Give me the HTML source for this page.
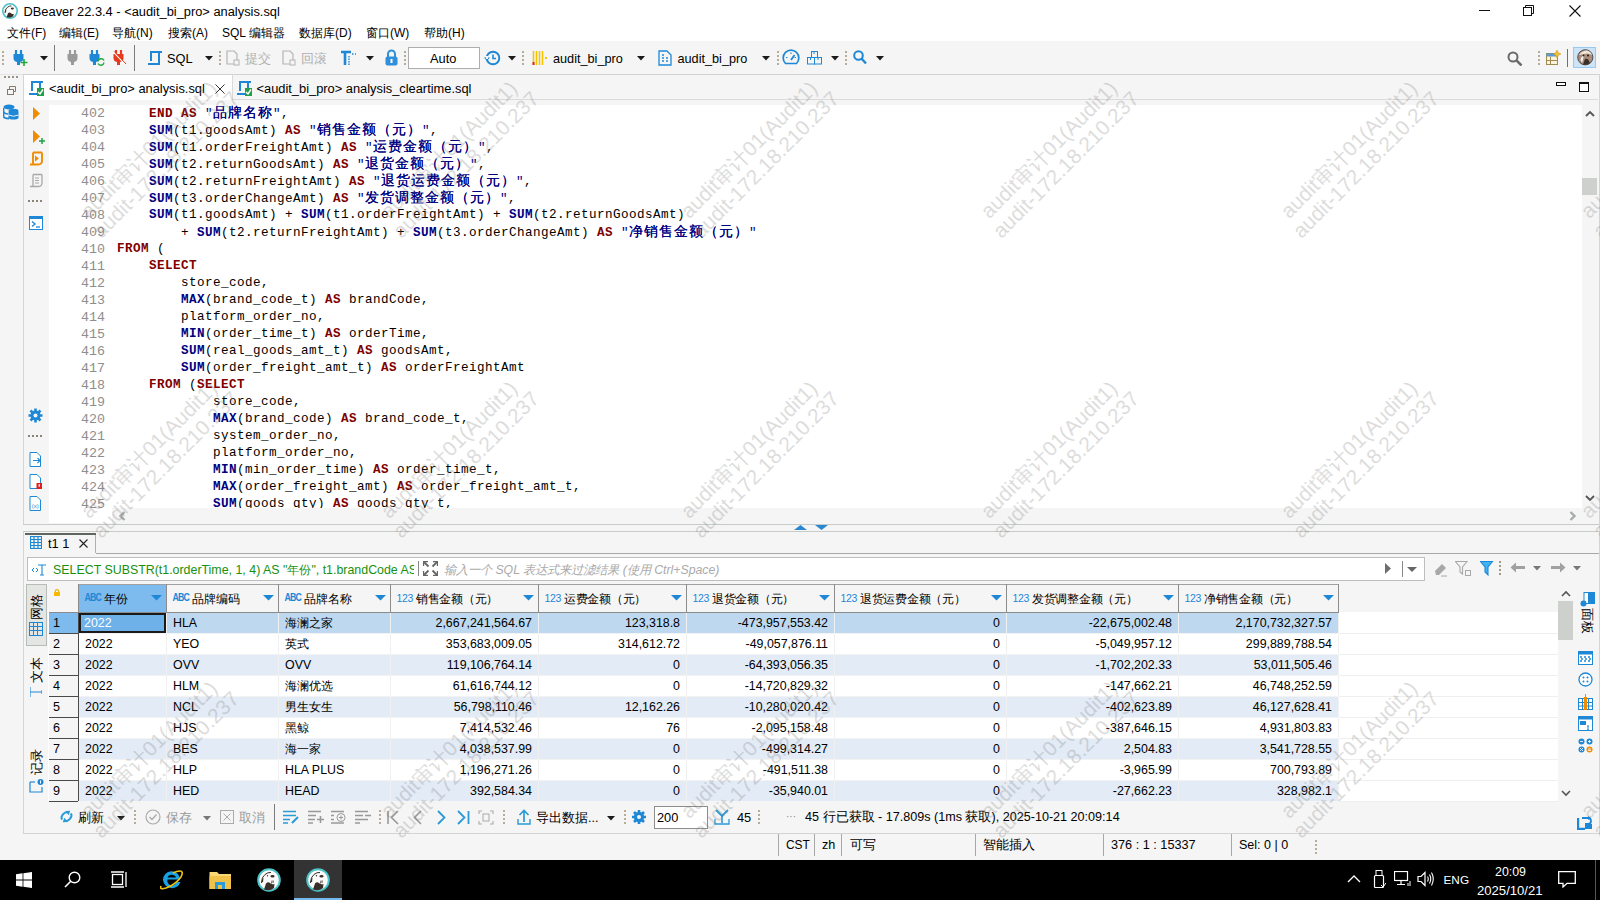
<!DOCTYPE html><html><head><meta charset="utf-8"><title>DBeaver</title><style>
*{margin:0;padding:0;box-sizing:border-box}
html,body{width:1600px;height:900px;overflow:hidden;background:#f5f5f5;font-family:"Liberation Sans",sans-serif;font-size:12px;color:#000;position:relative}
.ab{position:absolute}
.t{position:absolute;white-space:pre;line-height:1}
.code{position:absolute;font-family:"Liberation Mono",monospace;font-size:12.6px;letter-spacing:0.44px;white-space:pre;line-height:17px;color:#000}
.kw{color:#800000;font-weight:bold}
.fn{color:#000080;font-weight:bold}
.st{color:#000080}
.cj{font-size:14px;letter-spacing:1px;text-shadow:0.45px 0 0 #000080}
.ln{position:absolute;font-family:"Liberation Mono",monospace;font-size:13.33px;color:#8e8e8e;line-height:17px;white-space:pre;text-align:right;width:40px}
</style></head><body>
<div class="ab" style="left:0px;top:0px;width:1600px;height:41px;background:#fff;"></div>
<svg class="ab" style="left:2px;top:3px;" width="16" height="16" viewBox="0 0 16 16"><g transform="scale(0.6667)"><circle cx="12" cy="12" r="10.8" fill="#fbfbfb" stroke="#4ec3c8" stroke-width="2.4"/><path d="M4.5 15Q4.5 9 8 6.5Q11 4 14 4.5" stroke="#3a2e28" stroke-width="1.4" fill="none"/><path d="M4.5 14Q4.8 10.5 6.5 9.5L6 14Z" fill="#3a2e28"/><ellipse cx="15.5" cy="8.2" rx="2.3" ry="1.5" fill="#3a2e28"/><path d="M7 21.5L9 15.5Q11 13.5 13 15Q15 17 17.5 16L17 20Q13 23.5 7 21.5Z" fill="#3a2e28"/></g></svg>
<div class="t" style="left:23.5px;top:5.62px;font-size:12.85px;color:#000;">DBeaver 22.3.4 - &lt;audit_bi_pro&gt; analysis.sql</div>
<div class="ab" style="left:1479px;top:10px;width:11px;height:1px;background:#111;"></div>
<svg class="ab" style="left:1523px;top:5px;" width="12" height="11" viewBox="0 0 12 11"><rect x="0.5" y="2.5" width="8" height="8" fill="none" stroke="#111"/><path d="M2.5 2.5V0.5H10.5V8.5H8.5" fill="none" stroke="#111"/></svg>
<svg class="ab" style="left:1569px;top:5px;" width="12" height="12" viewBox="0 0 12 12"><path d="M0.5 0.5L11.5 11.5M11.5 0.5L0.5 11.5" stroke="#111" stroke-width="1.1"/></svg>
<div class="t" style="left:7px;top:27.34px;font-size:12px;color:#000;">文件(F)</div>
<div class="t" style="left:59px;top:27.34px;font-size:12px;color:#000;">编辑(E)</div>
<div class="t" style="left:112px;top:27.34px;font-size:12px;color:#000;">导航(N)</div>
<div class="t" style="left:168px;top:27.34px;font-size:12px;color:#000;">搜索(A)</div>
<div class="t" style="left:222px;top:27.34px;font-size:12px;color:#000;">SQL 编辑器</div>
<div class="t" style="left:299px;top:27.34px;font-size:12px;color:#000;">数据库(D)</div>
<div class="t" style="left:366px;top:27.34px;font-size:12px;color:#000;">窗口(W)</div>
<div class="t" style="left:424px;top:27.34px;font-size:12px;color:#000;">帮助(H)</div>
<div class="ab" style="left:0px;top:74px;width:1600px;height:1px;background:#e3e3e3;"></div>
<svg class="ab" style="left:2px;top:51px;" width="2" height="15" viewBox="0 0 2 15"><rect x="0" y="0" width="2" height="2" fill="#b5ad96"/><rect x="0" y="4" width="2" height="2" fill="#b5ad96"/><rect x="0" y="8" width="2" height="2" fill="#b5ad96"/><rect x="0" y="12" width="2" height="2" fill="#b5ad96"/></svg>
<svg class="ab" style="left:13px;top:50px;" width="16" height="16" viewBox="0 0 16 16"><path d="M3 0V4M8 0V4" stroke="#1e88d6" stroke-width="2.2"/><path d="M0.5 4H10.5V8Q10.5 11.5 7 12V15H4V12Q0.5 11.5 0.5 8Z" fill="#1e88d6"/><path d="M11 9V16M7.5 12.5H14.5" stroke="#1fa83a" stroke-width="1.6"/></svg>
<svg class="ab" style="left:40px;top:56px;" width="8" height="5" viewBox="0 0 8 5"><path d="M0 0H8L4 4.5Z" fill="#1a1a1a"/></svg>
<div class="ab" style="left:54px;top:45px;width:1px;height:26px;background:#7a7a7a;"></div>
<svg class="ab" style="left:67px;top:50px;" width="12" height="16" viewBox="0 0 12 16"><path d="M3 0V4M8 0V4" stroke="#9a9a9a" stroke-width="2.2"/><path d="M0.5 4H10.5V8Q10.5 11.5 7 12V15H4V12Q0.5 11.5 0.5 8Z" fill="#9a9a9a"/></svg>
<svg class="ab" style="left:89px;top:50px;" width="16" height="16" viewBox="0 0 16 16"><path d="M3 0V4M8 0V4" stroke="#1e88d6" stroke-width="2.2"/><path d="M0.5 4H10.5V8Q10.5 11.5 7 12V15H4V12Q0.5 11.5 0.5 8Z" fill="#1e88d6"/><path d="M9 11.5A3.2 3.2 0 0 1 15 10.5M15 12.5A3.2 3.2 0 0 1 9 13.5" stroke="#1fa83a" stroke-width="1.5" fill="none"/></svg>
<svg class="ab" style="left:113px;top:50px;" width="14" height="16" viewBox="0 0 14 16"><path d="M3 0V4M8 0V4" stroke="#e53a1c" stroke-width="2.2"/><path d="M0.5 4H10.5V8Q10.5 11.5 7 12V15H4V12Q0.5 11.5 0.5 8Z" fill="#e53a1c"/><path d="M0.5 2L12.5 14.5" stroke="#fff" stroke-width="1.2"/><path d="M1.2 1.5L13 14" stroke="#e53a1c" stroke-width="1"/></svg>
<div class="ab" style="left:134px;top:45px;width:1px;height:26px;background:#7a7a7a;"></div>
<svg class="ab" style="left:147px;top:50px;" width="15" height="16" viewBox="0 0 15 16"><rect x="3" y="1" width="12" height="2" fill="#1e88d6"/><rect x="3" y="1" width="2" height="10" fill="#1e88d6"/><rect x="11" y="1" width="2" height="14" fill="#1e88d6"/><rect x="1" y="13" width="12" height="2" fill="#1e88d6"/></svg>
<div class="t" style="left:167px;top:52.86px;font-size:12.8px;color:#000;">SQL</div>
<svg class="ab" style="left:205px;top:56px;" width="8" height="5" viewBox="0 0 8 5"><path d="M0 0H8L4 4.5Z" fill="#1a1a1a"/></svg>
<svg class="ab" style="left:219px;top:51px;" width="2" height="15" viewBox="0 0 2 15"><rect x="0" y="0" width="2" height="2" fill="#b5ad96"/><rect x="0" y="4" width="2" height="2" fill="#b5ad96"/><rect x="0" y="8" width="2" height="2" fill="#b5ad96"/><rect x="0" y="12" width="2" height="2" fill="#b5ad96"/></svg>
<svg class="ab" style="left:226px;top:50px;" width="15" height="16" viewBox="0 0 15 16"><path d="M1 1H8L11 4V14H1Z" fill="none" stroke="#b4b4b4" stroke-width="1.2"/><rect x="8" y="10" width="5" height="5" fill="#f5f5f5" stroke="#b4b4b4"/></svg>
<div class="t" style="left:245px;top:53.12px;font-size:12.5px;color:#b0b0b0;">提交</div>
<svg class="ab" style="left:282px;top:50px;" width="15" height="16" viewBox="0 0 15 16"><path d="M1 1H8L11 4V14H1Z" fill="none" stroke="#b4b4b4" stroke-width="1.2"/><rect x="8" y="10" width="5" height="5" fill="#f5f5f5" stroke="#b4b4b4"/></svg>
<div class="t" style="left:301px;top:53.12px;font-size:12.5px;color:#b0b0b0;">回滚</div>
<svg class="ab" style="left:340px;top:50px;" width="17" height="16" viewBox="0 0 17 16"><path d="M1 2H11M5 2V15" stroke="#1e88d6" stroke-width="2.6"/><path d="M9 6V15M12 4H14M15 4H16" stroke="#1e88d6" stroke-width="1.4" stroke-dasharray="1.5 1"/></svg>
<svg class="ab" style="left:366px;top:56px;" width="8" height="5" viewBox="0 0 8 5"><path d="M0 0H8L4 4.5Z" fill="#1a1a1a"/></svg>
<svg class="ab" style="left:385px;top:49px;" width="13" height="17" viewBox="0 0 13 17"><path d="M3 8V5A3.5 3.5 0 0 1 10 5V8" stroke="#2f8fd8" stroke-width="2" fill="none"/><rect x="0.5" y="7.5" width="12" height="9" rx="2" fill="#2f8fd8"/><rect x="5.5" y="10" width="2" height="4" fill="#fff"/></svg>
<svg class="ab" style="left:404px;top:51px;" width="2" height="15" viewBox="0 0 2 15"><rect x="0" y="0" width="2" height="2" fill="#b5ad96"/><rect x="0" y="4" width="2" height="2" fill="#b5ad96"/><rect x="0" y="8" width="2" height="2" fill="#b5ad96"/><rect x="0" y="12" width="2" height="2" fill="#b5ad96"/></svg>
<div class="ab" style="left:408px;top:47px;width:72px;height:22px;background:#fff;border:1px solid #adadad"></div>
<div class="t" style="left:430px;top:52.86px;font-size:12.8px;color:#000;">Auto</div>
<svg class="ab" style="left:484px;top:50px;" width="17" height="16" viewBox="0 0 17 16"><circle cx="9" cy="8" r="6.3" fill="none" stroke="#1e88d6" stroke-width="1.9"/><path d="M9 4.5V8.5H12" stroke="#1e88d6" stroke-width="1.6" fill="none"/><path d="M0 7.5L3 11L6 7.5Z" fill="#1e88d6"/><rect x="2" y="6" width="2" height="3" fill="#f5f5f5"/></svg>
<svg class="ab" style="left:508px;top:56px;" width="8" height="5" viewBox="0 0 8 5"><path d="M0 0H8L4 4.5Z" fill="#1a1a1a"/></svg>
<svg class="ab" style="left:522px;top:51px;" width="2" height="15" viewBox="0 0 2 15"><rect x="0" y="0" width="2" height="2" fill="#b5ad96"/><rect x="0" y="4" width="2" height="2" fill="#b5ad96"/><rect x="0" y="8" width="2" height="2" fill="#b5ad96"/><rect x="0" y="12" width="2" height="2" fill="#b5ad96"/></svg>
<svg class="ab" style="left:532px;top:50px;" width="16" height="16" viewBox="0 0 16 16"><path d="M1.5 1V15M4.5 1V15M7.5 1V15M10.5 1V15" stroke="#f4c400" stroke-width="1.5"/><rect x="0.5" y="12" width="2" height="3" fill="#e02020"/><rect x="13" y="7" width="2" height="2" fill="#f4c400"/></svg>
<div class="t" style="left:553px;top:52.95px;font-size:12.7px;color:#000;">audit_bi_pro</div>
<svg class="ab" style="left:637px;top:56px;" width="8" height="5" viewBox="0 0 8 5"><path d="M0 0H8L4 4.5Z" fill="#1a1a1a"/></svg>
<svg class="ab" style="left:658px;top:50px;" width="14" height="16" viewBox="0 0 14 16"><path d="M1 1H9L13 5V15H1Z" fill="none" stroke="#1e88d6" stroke-width="1.3"/><path d="M4 5H6M4 8H6M4 11H6M8 8H10M8 11H10" stroke="#1e88d6" stroke-width="1.3"/></svg>
<div class="t" style="left:677.5px;top:52.95px;font-size:12.7px;color:#000;">audit_bi_pro</div>
<svg class="ab" style="left:762px;top:56px;" width="8" height="5" viewBox="0 0 8 5"><path d="M0 0H8L4 4.5Z" fill="#1a1a1a"/></svg>
<svg class="ab" style="left:777px;top:51px;" width="2" height="15" viewBox="0 0 2 15"><rect x="0" y="0" width="2" height="2" fill="#b5ad96"/><rect x="0" y="4" width="2" height="2" fill="#b5ad96"/><rect x="0" y="8" width="2" height="2" fill="#b5ad96"/><rect x="0" y="12" width="2" height="2" fill="#b5ad96"/></svg>
<svg class="ab" style="left:782px;top:49px;" width="18" height="16" viewBox="0 0 18 16"><path d="M3.5 14.5A7.8 7.8 0 1 1 14.5 14.5Z" fill="none" stroke="#1e88d6" stroke-width="1.7"/><path d="M9 11L12.5 6" stroke="#1e88d6" stroke-width="1.8"/><path d="M4 8.5H5.5M9 3.5V5M12.5 8.5H14" stroke="#1e88d6" stroke-width="1.2"/></svg>
<svg class="ab" style="left:807px;top:51px;" width="15" height="14" viewBox="0 0 15 14"><rect x="4.5" y="0.5" width="6" height="6" fill="none" stroke="#1e88d6"/><rect x="0.5" y="6.5" width="7" height="6.5" fill="none" stroke="#1e88d6"/><rect x="7.5" y="6.5" width="7" height="6.5" fill="none" stroke="#1e88d6"/><path d="M7 1V3M3.5 7V9M11 7V9" stroke="#1e88d6"/></svg>
<svg class="ab" style="left:831px;top:56px;" width="8" height="5" viewBox="0 0 8 5"><path d="M0 0H8L4 4.5Z" fill="#1a1a1a"/></svg>
<svg class="ab" style="left:845px;top:51px;" width="2" height="15" viewBox="0 0 2 15"><rect x="0" y="0" width="2" height="2" fill="#b5ad96"/><rect x="0" y="4" width="2" height="2" fill="#b5ad96"/><rect x="0" y="8" width="2" height="2" fill="#b5ad96"/><rect x="0" y="12" width="2" height="2" fill="#b5ad96"/></svg>
<svg class="ab" style="left:853px;top:50px;" width="14" height="15" viewBox="0 0 14 15"><circle cx="5.5" cy="5.5" r="4.3" fill="none" stroke="#1e88d6" stroke-width="2"/><path d="M8.5 8.5L13 13.5" stroke="#1e88d6" stroke-width="2.4"/></svg>
<svg class="ab" style="left:876px;top:56px;" width="8" height="5" viewBox="0 0 8 5"><path d="M0 0H8L4 4.5Z" fill="#1a1a1a"/></svg>
<svg class="ab" style="left:1507px;top:51px;" width="16" height="15" viewBox="0 0 16 15"><circle cx="6" cy="6" r="4.5" fill="none" stroke="#6a6a6a" stroke-width="2"/><path d="M9.2 9.2L14.5 14.5" stroke="#6a6a6a" stroke-width="2.5"/></svg>
<svg class="ab" style="left:1538px;top:51px;" width="2" height="15" viewBox="0 0 2 15"><rect x="0" y="0" width="2" height="2" fill="#b5ad96"/><rect x="0" y="4" width="2" height="2" fill="#b5ad96"/><rect x="0" y="8" width="2" height="2" fill="#b5ad96"/><rect x="0" y="12" width="2" height="2" fill="#b5ad96"/></svg>
<svg class="ab" style="left:1546px;top:50px;" width="15" height="16" viewBox="0 0 15 16"><rect x="0.5" y="3.5" width="11" height="11" fill="#fbf3dc" stroke="#a08a50"/><rect x="0.5" y="3.5" width="11" height="3" fill="#5b9bd5"/><path d="M4.5 6.5V14.5M0.5 10.5H11.5" stroke="#a08a50"/><path d="M11 0L12.5 3L15 4L12.5 5L11 8L9.5 5L7 4L9.5 3Z" fill="#f0c030" stroke="#c89010" stroke-width="0.5"/></svg>
<div class="ab" style="left:1567px;top:49px;width:1px;height:18px;background:#707070;"></div>
<div class="ab" style="left:1573px;top:47px;width:23px;height:21px;background:#cce4f7;border:1px solid #99c9ef"></div>
<svg class="ab" style="left:1577px;top:49px;" width="17" height="17" viewBox="0 0 17 17"><circle cx="8.3" cy="8.3" r="7.6" fill="#a88c7c" stroke="#3a3030" stroke-width="0.8"/><path d="M2 6Q5 1.5 10 1.5Q14 2.5 15 6Q11 3.5 7 5Z" fill="#efe6da"/><path d="M3.5 11Q4 7 7 6.5L5 14Z" fill="#f4f0ea"/><path d="M6 15.5L8 10Q10 9 11.5 11L13 14Q10 16.5 6 15.5Z" fill="#3a2e28"/><circle cx="6.5" cy="6.5" r="0.9" fill="#222"/><circle cx="11" cy="6.5" r="1" fill="#222"/></svg>
<div class="ab" style="left:4px;top:76px;width:2px;height:2px;background:#9a9486;"></div>
<div class="ab" style="left:8px;top:76px;width:2px;height:2px;background:#9a9486;"></div>
<div class="ab" style="left:12px;top:76px;width:2px;height:2px;background:#9a9486;"></div>
<div class="ab" style="left:16px;top:76px;width:2px;height:2px;background:#9a9486;"></div>
<svg class="ab" style="left:7px;top:86px;" width="9" height="9" viewBox="0 0 9 9"><rect x="0.5" y="3.5" width="6" height="5" fill="none" stroke="#857a6a"/><path d="M2.5 3.5V0.5H8.5V5.5H6.5" fill="none" stroke="#857a6a"/></svg>
<svg class="ab" style="left:3px;top:104px;" width="16" height="16" viewBox="0 0 16 16"><ellipse cx="6" cy="3" rx="5.5" ry="2.5" fill="#1e88d6"/><path d="M0.5 4V12Q0.5 14.5 6 14.5" stroke="#1e88d6" stroke-width="1.8" fill="none"/><path d="M0.5 8Q2 10 5 10" stroke="#1e88d6" stroke-width="1.5" fill="none"/><ellipse cx="10.5" cy="7" rx="5" ry="2.3" fill="#1e88d6"/><path d="M5.5 8V13.5Q5.5 15.5 10.5 15.5Q15.5 15.5 15.5 13.5V8" fill="#1e88d6"/><path d="M5.5 11Q10.5 13.5 15.5 11" stroke="#fff" stroke-width="0.9" fill="none"/></svg>
<div class="ab" style="left:23px;top:74px;width:1575px;height:450px;background:#f5f5f5;border-left:1px solid #d4d4d4;"></div>
<div class="ab" style="left:24px;top:75px;width:209px;height:25px;background:#fff;"></div>
<div class="ab" style="left:23px;top:74px;width:1576px;height:1px;background:#d2d2d2;"></div>
<div class="ab" style="left:1599px;top:74px;width:1px;height:760px;background:#d4d4d4;"></div>
<div class="ab" style="left:232px;top:74px;width:1px;height:26px;background:#dadada;"></div>
<div class="ab" style="left:233px;top:99px;width:1365px;height:1px;background:#dadada;"></div>
<svg class="ab" style="left:28px;top:80px;" width="16" height="16" viewBox="0 0 16 16"><rect x="3" y="1" width="12" height="2" fill="#1e88d6"/><rect x="3" y="1" width="2" height="10" fill="#1e88d6"/><rect x="11" y="1" width="2" height="14" fill="#1e88d6"/><rect x="1" y="13" width="12" height="2" fill="#1e88d6"/><rect x="9" y="8" width="7" height="8" fill="#21a047"/><path d="M10 12L12 14L15 9.5" stroke="#fff" stroke-width="1.4" fill="none"/></svg>
<div class="t" style="left:49px;top:83.11px;font-size:12.87px;color:#000;">&lt;audit_bi_pro&gt; analysis.sql</div>
<svg class="ab" style="left:215px;top:84px;" width="10" height="10" viewBox="0 0 10 10"><path d="M0.5 0.5L9.5 9.5M9.5 0.5L0.5 9.5" stroke="#333" stroke-width="1"/></svg>
<svg class="ab" style="left:236px;top:80px;" width="16" height="16" viewBox="0 0 16 16"><rect x="3" y="1" width="12" height="2" fill="#1e88d6"/><rect x="3" y="1" width="2" height="10" fill="#1e88d6"/><rect x="11" y="1" width="2" height="14" fill="#1e88d6"/><rect x="1" y="13" width="12" height="2" fill="#1e88d6"/><rect x="9" y="8" width="7" height="8" fill="#21a047"/><path d="M10 12L12 14L15 9.5" stroke="#fff" stroke-width="1.4" fill="none"/></svg>
<div class="t" style="left:256.5px;top:83.12px;font-size:12.85px;color:#000;">&lt;audit_bi_pro&gt; analysis_cleartime.sql</div>
<div class="ab" style="left:1556px;top:82px;width:10px;height:4px;background:#fff;border:1.5px solid #111"></div>
<div class="ab" style="left:1579px;top:82px;width:10px;height:10px;background:#fff;border:1.5px solid #111;border-top-width:2.5px"></div>
<div class="ab" style="left:49px;top:105px;width:1533px;height:403px;background:#fff;"></div>
<svg class="ab" style="left:33px;top:107px;" width="8" height="14" viewBox="0 0 8 14"><path d="M0 0L7 6.5L0 13Z" fill="#f08c00"/></svg>
<svg class="ab" style="left:33px;top:130px;" width="12" height="14" viewBox="0 0 12 14"><path d="M0 0L7 6.5L0 13Z" fill="#f08c00"/><path d="M9 8V14M6 11H12" stroke="#21a047" stroke-width="1.5"/></svg>
<svg class="ab" style="left:29px;top:151px;" width="14" height="15" viewBox="0 0 14 15"><path d="M4 1.5H13M4 1.5V13.5H1M13 1.5V10Q13 13.5 9 13.5H1.5" stroke="#f08c00" stroke-width="1.9" fill="none"/><path d="M6 4.5L10 7.5L6 10.5Z" fill="#f08c00"/></svg>
<svg class="ab" style="left:29px;top:173px;" width="14" height="15" viewBox="0 0 14 15"><path d="M4 1.5H13M4 1.5V13.5H1M13 1.5V10Q13 13.5 9 13.5H1.5" stroke="#a8a8a8" stroke-width="1.3" fill="none"/><path d="M6 5H10M6 7.5H10M6 10H10" stroke="#a8a8a8"/></svg>
<div class="ab" style="left:28px;top:200px;width:2px;height:2px;background:#8a8478;"></div>
<div class="ab" style="left:32px;top:200px;width:2px;height:2px;background:#8a8478;"></div>
<div class="ab" style="left:36px;top:200px;width:2px;height:2px;background:#8a8478;"></div>
<div class="ab" style="left:40px;top:200px;width:2px;height:2px;background:#8a8478;"></div>
<svg class="ab" style="left:29px;top:216px;" width="14" height="14" viewBox="0 0 14 14"><rect x="0.5" y="0.5" width="13" height="13" fill="#fff" stroke="#1e88d6"/><rect x="0.5" y="0.5" width="13" height="2.5" fill="#1e88d6"/><path d="M3 5.5L6 8L3 10.5" stroke="#1e88d6" stroke-width="1.4" fill="none"/><path d="M7 11H11" stroke="#1e88d6" stroke-width="1.3"/></svg>
<svg class="ab" style="left:28px;top:408px;" width="15" height="15" viewBox="0 0 15 15"><circle cx="7.5" cy="7.5" r="5" fill="#1e88d6"/><path d="M7.5 0.5V14.5M0.5 7.5H14.5M2.5 2.5L12.5 12.5M12.5 2.5L2.5 12.5" stroke="#1e88d6" stroke-width="2.6"/><circle cx="7.5" cy="7.5" r="2" fill="#f5f5f5"/></svg>
<div class="ab" style="left:28px;top:435px;width:2px;height:2px;background:#8a8478;"></div>
<div class="ab" style="left:32px;top:435px;width:2px;height:2px;background:#8a8478;"></div>
<div class="ab" style="left:36px;top:435px;width:2px;height:2px;background:#8a8478;"></div>
<div class="ab" style="left:40px;top:435px;width:2px;height:2px;background:#8a8478;"></div>
<svg class="ab" style="left:29px;top:452px;" width="14" height="15" viewBox="0 0 14 15"><path d="M1 0.5H8L11.5 4V14.5H1Z" fill="#fff" stroke="#1e88d6"/><path d="M4 8.5H11M8.5 6L11 8.5L8.5 11" stroke="#1e88d6" stroke-width="1.1" fill="none"/></svg>
<svg class="ab" style="left:29px;top:474px;" width="14" height="15" viewBox="0 0 14 15"><path d="M1 0.5H8L11.5 4V14.5H1Z" fill="#fff" stroke="#1e88d6"/><rect x="7.5" y="9" width="5.5" height="6" fill="#e02020"/><rect x="9.6" y="10.2" width="1.3" height="2.5" fill="#fff"/></svg>
<svg class="ab" style="left:29px;top:496px;" width="14" height="15" viewBox="0 0 14 15"><path d="M1 0.5H8L11.5 4V14.5H1Z" fill="#fff" stroke="#1e88d6"/><text x="6.3" y="11.5" font-size="6" fill="#1e88d6" text-anchor="middle" font-family="Liberation Sans">(x)</text></svg>
<div class="ab" style="left:49px;top:105px;width:1533px;height:403px;overflow:hidden">
<div class="ln" style="left:16px;top:0px">402</div>
<div class="code" style="left:68px;top:0px">    <span class="kw">END</span> <span class="kw">AS</span> <span class="st">"<span class="cj">品牌名称</span>"</span>,</div>
<div class="ln" style="left:16px;top:17px">403</div>
<div class="code" style="left:68px;top:17px">    <span class="fn">SUM</span>(t1.goodsAmt) <span class="kw">AS</span> <span class="st">"<span class="cj">销售金额（元）</span>"</span>,</div>
<div class="ln" style="left:16px;top:34px">404</div>
<div class="code" style="left:68px;top:34px">    <span class="fn">SUM</span>(t1.orderFreightAmt) <span class="kw">AS</span> <span class="st">"<span class="cj">运费金额（元）</span>"</span>,</div>
<div class="ln" style="left:16px;top:51px">405</div>
<div class="code" style="left:68px;top:51px">    <span class="fn">SUM</span>(t2.returnGoodsAmt) <span class="kw">AS</span> <span class="st">"<span class="cj">退货金额（元）</span>"</span>,</div>
<div class="ln" style="left:16px;top:68px">406</div>
<div class="code" style="left:68px;top:68px">    <span class="fn">SUM</span>(t2.returnFreightAmt) <span class="kw">AS</span> <span class="st">"<span class="cj">退货运费金额（元）</span>"</span>,</div>
<div class="ln" style="left:16px;top:85px">407</div>
<div class="code" style="left:68px;top:85px">    <span class="fn">SUM</span>(t3.orderChangeAmt) <span class="kw">AS</span> <span class="st">"<span class="cj">发货调整金额（元）</span>"</span>,</div>
<div class="ln" style="left:16px;top:102px">408</div>
<div class="code" style="left:68px;top:102px">    <span class="fn">SUM</span>(t1.goodsAmt) + <span class="fn">SUM</span>(t1.orderFreightAmt) + <span class="fn">SUM</span>(t2.returnGoodsAmt)</div>
<div class="ln" style="left:16px;top:119px">409</div>
<div class="code" style="left:68px;top:119px">        + <span class="fn">SUM</span>(t2.returnFreightAmt) + <span class="fn">SUM</span>(t3.orderChangeAmt) <span class="kw">AS</span> <span class="st">"<span class="cj">净销售金额（元）</span>"</span></div>
<div class="ln" style="left:16px;top:136px">410</div>
<div class="code" style="left:68px;top:136px"><span class="kw">FROM</span> (</div>
<div class="ln" style="left:16px;top:153px">411</div>
<div class="code" style="left:68px;top:153px">    <span class="kw">SELECT</span></div>
<div class="ln" style="left:16px;top:170px">412</div>
<div class="code" style="left:68px;top:170px">        store_code,</div>
<div class="ln" style="left:16px;top:187px">413</div>
<div class="code" style="left:68px;top:187px">        <span class="fn">MAX</span>(brand_code_t) <span class="kw">AS</span> brandCode,</div>
<div class="ln" style="left:16px;top:204px">414</div>
<div class="code" style="left:68px;top:204px">        platform_order_no,</div>
<div class="ln" style="left:16px;top:221px">415</div>
<div class="code" style="left:68px;top:221px">        <span class="fn">MIN</span>(order_time_t) <span class="kw">AS</span> orderTime,</div>
<div class="ln" style="left:16px;top:238px">416</div>
<div class="code" style="left:68px;top:238px">        <span class="fn">SUM</span>(real_goods_amt_t) <span class="kw">AS</span> goodsAmt,</div>
<div class="ln" style="left:16px;top:255px">417</div>
<div class="code" style="left:68px;top:255px">        <span class="fn">SUM</span>(order_freight_amt_t) <span class="kw">AS</span> orderFreightAmt</div>
<div class="ln" style="left:16px;top:272px">418</div>
<div class="code" style="left:68px;top:272px">    <span class="kw">FROM</span> (<span class="kw">SELECT</span></div>
<div class="ln" style="left:16px;top:289px">419</div>
<div class="code" style="left:68px;top:289px">            store_code,</div>
<div class="ln" style="left:16px;top:306px">420</div>
<div class="code" style="left:68px;top:306px">            <span class="fn">MAX</span>(brand_code) <span class="kw">AS</span> brand_code_t,</div>
<div class="ln" style="left:16px;top:323px">421</div>
<div class="code" style="left:68px;top:323px">            system_order_no,</div>
<div class="ln" style="left:16px;top:340px">422</div>
<div class="code" style="left:68px;top:340px">            platform_order_no,</div>
<div class="ln" style="left:16px;top:357px">423</div>
<div class="code" style="left:68px;top:357px">            <span class="fn">MIN</span>(min_order_time) <span class="kw">AS</span> order_time_t,</div>
<div class="ln" style="left:16px;top:374px">424</div>
<div class="code" style="left:68px;top:374px">            <span class="fn">MAX</span>(order_freight_amt) <span class="kw">AS</span> order_freight_amt_t,</div>
<div class="ln" style="left:16px;top:391px">425</div>
<div class="code" style="left:68px;top:391px">            <span class="fn">SUM</span>(goods_qty) <span class="kw">AS</span> goods_qty_t,</div>
</div>
<div class="ab" style="left:1582px;top:105px;width:16px;height:403px;background:#f5f5f5;"></div>
<svg class="ab" style="left:1585px;top:110px;" width="10" height="7" viewBox="0 0 10 7"><path d="M1 6L5 2L9 6" stroke="#555" stroke-width="1.8" fill="none"/></svg>
<div class="ab" style="left:1582px;top:178px;width:15px;height:17px;background:#cdd0cd;"></div>
<svg class="ab" style="left:1585px;top:495px;" width="10" height="7" viewBox="0 0 10 7"><path d="M1 1L5 5L9 1" stroke="#555" stroke-width="1.8" fill="none"/></svg>
<div class="ab" style="left:49px;top:508px;width:63px;height:15px;background:#fff;"></div>
<div class="ab" style="left:112px;top:508px;width:1470px;height:15px;background:#f5f5f5;"></div>
<svg class="ab" style="left:119px;top:511px;" width="8" height="10" viewBox="0 0 8 10"><path d="M5.5 1L1.5 5L5.5 9" stroke="#a8aca8" stroke-width="2.4" fill="none"/></svg>
<svg class="ab" style="left:1569px;top:511px;" width="8" height="10" viewBox="0 0 8 10"><path d="M1.5 1L5.5 5L1.5 9" stroke="#a8aca8" stroke-width="2.4" fill="none"/></svg>
<div class="ab" style="left:23px;top:524px;width:1576px;height:1px;background:#c8ccc8;"></div>
<div class="ab" style="left:23px;top:531px;width:1576px;height:1px;background:#c8ccc8;"></div>
<svg class="ab" style="left:794px;top:525px;" width="14" height="6" viewBox="0 0 14 6"><path d="M0 5H13L6.5 0Z" fill="#2a88d0"/></svg>
<svg class="ab" style="left:815px;top:525px;" width="14" height="6" viewBox="0 0 14 6"><path d="M0 0H13L6.5 5Z" fill="#2a88d0"/></svg>
<div class="ab" style="left:23px;top:532px;width:1576px;height:302px;background:#f5f5f5;border-left:1px solid #d4d4d4;border-bottom:1px solid #d4d4d4"></div>
<div class="ab" style="left:25px;top:533px;width:71px;height:2px;background:#5f6560;"></div>
<div class="ab" style="left:95px;top:535px;width:1px;height:18px;background:#b0b0b0;"></div>
<div class="ab" style="left:96px;top:553px;width:1503px;height:1px;background:#a8a8a8;"></div>
<svg class="ab" style="left:30px;top:536px;" width="12" height="13" viewBox="0 0 12 13"><rect x="0.5" y="0.5" width="11" height="12" fill="none" stroke="#1e88d6" stroke-width="1.2"/><path d="M0.5 3.5H11.5M0.5 6.5H11.5M0.5 9.5H11.5M4 0.5V12.5M8 0.5V12.5" stroke="#1e88d6" stroke-width="1.2"/></svg>
<div class="t" style="left:48px;top:537.66px;font-size:12.8px;color:#000;">t1 1</div>
<svg class="ab" style="left:79px;top:539px;" width="9" height="9" viewBox="0 0 9 9"><path d="M0.5 0.5L8.5 8.5M8.5 0.5L0.5 8.5" stroke="#222" stroke-width="1.1"/></svg>
<div class="ab" style="left:27px;top:557px;width:1398px;height:24px;background:#fff;border:1px solid #bdbdbd"></div>
<svg class="ab" style="left:31px;top:564px;" width="15" height="12" viewBox="0 0 15 12"><path d="M3 4L1 6L3 8M5 4L7 6L5 8" stroke="#1e88d6" fill="none"/><path d="M7 1H15M11 1V11M9 11H13" stroke="#1e88d6" stroke-width="1.1" fill="none"/></svg>
<div class="ab" style="left:53px;top:557px;width:361px;height:24px;overflow:hidden">
<div class="t" style="left:0px;top:6.50px;font-size:12.4px;color:#18900e;">SELECT SUBSTR(t1.orderTime, 1, 4) AS "年份", t1.brandCode AS "品牌编码"</div>
</div>
<div class="ab" style="left:418px;top:561px;width:1px;height:15px;background:#888;"></div>
<svg class="ab" style="left:423px;top:561px;" width="15" height="15" viewBox="0 0 15 15"><path d="M0.5 5V0.5H5M10 0.5H14.5V5M14.5 10V14.5H10M5 14.5H0.5V10" stroke="#666" stroke-width="1.4" fill="none"/><path d="M1 1L5.5 5.5M14 1L9.5 5.5M1 14L5.5 9.5M14 14L9.5 9.5" stroke="#666" stroke-width="1.8"/></svg>
<div class="t" style="left:444px;top:563.59px;font-size:12.3px;color:#aaaaaa;font-style:italic">输入一个 SQL 表达式来过滤结果 (使用 Ctrl+Space)</div>
<svg class="ab" style="left:1384px;top:562px;" width="8" height="13" viewBox="0 0 8 13"><path d="M1 1L7 6.5L1 12Z" fill="#6e6e6e"/></svg>
<div class="ab" style="left:1402px;top:561px;width:1px;height:16px;background:#888;"></div>
<svg class="ab" style="left:1406px;top:566px;" width="12" height="7" viewBox="0 0 12 7"><path d="M1 1H11L6 6Z" fill="#666"/></svg>
<svg class="ab" style="left:1433px;top:561px;" width="16" height="16" viewBox="0 0 16 16"><path d="M2 10L9 3L13 7L6 14H3Z" fill="#a8a8a8"/><path d="M8 15H14" stroke="#a8a8a8"/></svg>
<svg class="ab" style="left:1455px;top:561px;" width="17" height="16" viewBox="0 0 17 16"><path d="M0.5 0.5H12L7.5 6V13L5 11V6Z" fill="none" stroke="#a8a8a8" stroke-width="1.1"/><rect x="10.5" y="9.5" width="5" height="5" fill="none" stroke="#a8a8a8"/></svg>
<svg class="ab" style="left:1480px;top:561px;" width="14" height="16" viewBox="0 0 14 16"><path d="M0.5 0.5H12.5L8 6V14L5 11V6Z" fill="#40b4f0" stroke="#1e88d6" stroke-width="1.1"/></svg>
<svg class="ab" style="left:1499px;top:561px;" width="2" height="14" viewBox="0 0 2 14"><rect x="0" y="0" width="2" height="2" fill="#a09a80"/><rect x="0" y="4" width="2" height="2" fill="#a09a80"/><rect x="0" y="8" width="2" height="2" fill="#a09a80"/><rect x="0" y="12" width="2" height="2" fill="#a09a80"/></svg>
<svg class="ab" style="left:1510px;top:562px;" width="16" height="11" viewBox="0 0 16 11"><path d="M6 0.5L0.5 5.5L6 10.5V7H15V4H6Z" fill="#a0a0a0"/></svg>
<svg class="ab" style="left:1533px;top:566px;" width="8" height="5" viewBox="0 0 8 5"><path d="M0 0H8L4 4.5Z" fill="#777"/></svg>
<svg class="ab" style="left:1550px;top:562px;" width="16" height="11" viewBox="0 0 16 11"><path d="M10 0.5L15.5 5.5L10 10.5V7H1V4H10Z" fill="#a0a0a0"/></svg>
<svg class="ab" style="left:1573px;top:566px;" width="8" height="5" viewBox="0 0 8 5"><path d="M0 0H8L4 4.5Z" fill="#777"/></svg>
<div class="ab" style="left:48px;top:612px;width:1510px;height:189px;background:#fff;"></div>
<div class="ab" style="left:26px;top:584px;width:21px;height:62px;background:#e4e6e4;border:1px solid #b8bcb8"></div>
<div class="t" style="left:36.5px;top:606.5px;font-size:12.5px;transform:translate(-50%,-50%) rotate(-90deg)">网格</div>
<svg class="ab" style="left:29px;top:622px;" width="14" height="14" viewBox="0 0 14 14"><rect x="0.5" y="0.5" width="13" height="13" fill="none" stroke="#1e88d6"/><path d="M0.5 4.5H13.5M0.5 8.5H13.5M4.5 0.5V13.5M8.5 0.5V13.5" stroke="#1e88d6"/></svg>
<div class="t" style="left:36.5px;top:670px;font-size:12.5px;transform:translate(-50%,-50%) rotate(-90deg)">文本</div>
<svg class="ab" style="left:30px;top:685px;" width="12" height="14" viewBox="0 0 12 14"><path d="M1 1H11M6 1V13M4 13H8" stroke="#1e88d6" stroke-width="1.1" transform="rotate(-90 6 7)" fill="none"/></svg>
<div class="t" style="left:36.5px;top:762px;font-size:12.5px;transform:translate(-50%,-50%) rotate(-90deg)">记录</div>
<svg class="ab" style="left:29px;top:778px;" width="15" height="15" viewBox="0 0 15 15"><path d="M1 4V14H13V9" stroke="#1e88d6" stroke-width="1.2" fill="none"/><path d="M1 4H6" stroke="#1e88d6" stroke-width="1.2"/><circle cx="11.5" cy="4" r="3" fill="#1e88d6"/><path d="M11.5 2.5V5.5" stroke="#fff"/></svg>
<div class="ab" style="left:49px;top:584px;width:1509px;height:28px;background:#f5f5f5;"></div>
<div class="ab" style="left:79px;top:584px;width:1260px;height:1px;background:#a0a0a0;"></div>
<div class="ab" style="left:79px;top:585px;width:87px;height:27px;background:#7dbaed;"></div>
<svg class="ab" style="left:54px;top:589px;" width="6" height="7" viewBox="0 0 6 7"><path d="M1.2 3V2.4A1.8 1.8 0 0 1 4.8 2.4V3" stroke="#f0b000" stroke-width="1.2" fill="none"/><rect x="0" y="3" width="6" height="4" rx="0.6" fill="#f8b800"/></svg>
<div class="ab" style="left:78px;top:584px;width:1px;height:28px;background:#8c8c8c;"></div>
<div class="ab" style="left:166px;top:584px;width:1px;height:28px;background:#8c8c8c;"></div>
<div class="ab" style="left:278px;top:584px;width:1px;height:28px;background:#8c8c8c;"></div>
<div class="ab" style="left:390px;top:584px;width:1px;height:28px;background:#8c8c8c;"></div>
<div class="ab" style="left:538px;top:584px;width:1px;height:28px;background:#8c8c8c;"></div>
<div class="ab" style="left:686px;top:584px;width:1px;height:28px;background:#8c8c8c;"></div>
<div class="ab" style="left:834px;top:584px;width:1px;height:28px;background:#8c8c8c;"></div>
<div class="ab" style="left:1006px;top:584px;width:1px;height:28px;background:#8c8c8c;"></div>
<div class="ab" style="left:1178px;top:584px;width:1px;height:28px;background:#8c8c8c;"></div>
<div class="ab" style="left:1338px;top:584px;width:1px;height:28px;background:#8c8c8c;"></div>
<div class="ab" style="left:49px;top:612px;width:1290px;height:1px;background:#8c8c8c;"></div>
<div class="t" style="left:84.5px;top:594.05px;font-size:8.8px;color:#1e88d6;font-weight:bold;letter-spacing:-0.8px;transform:scaleY(1.2);transform-origin:0 85%">ABC</div>
<div class="t" style="left:104px;top:592.59px;font-size:12.3px;color:#000;">年份</div>
<svg class="ab" style="left:151px;top:595px;" width="11" height="6" viewBox="0 0 11 6"><path d="M0 0H11L5.5 5.5Z" fill="#1e88d6"/></svg>
<div class="t" style="left:172.5px;top:594.05px;font-size:8.8px;color:#1e88d6;font-weight:bold;letter-spacing:-0.8px;transform:scaleY(1.2);transform-origin:0 85%">ABC</div>
<div class="t" style="left:192px;top:592.59px;font-size:12.3px;color:#000;">品牌编码</div>
<svg class="ab" style="left:263px;top:595px;" width="11" height="6" viewBox="0 0 11 6"><path d="M0 0H11L5.5 5.5Z" fill="#1e88d6"/></svg>
<div class="t" style="left:284.5px;top:594.05px;font-size:8.8px;color:#1e88d6;font-weight:bold;letter-spacing:-0.8px;transform:scaleY(1.2);transform-origin:0 85%">ABC</div>
<div class="t" style="left:304px;top:592.59px;font-size:12.3px;color:#000;">品牌名称</div>
<svg class="ab" style="left:375px;top:595px;" width="11" height="6" viewBox="0 0 11 6"><path d="M0 0H11L5.5 5.5Z" fill="#1e88d6"/></svg>
<div class="t" style="left:396.5px;top:592.61px;font-size:10.5px;color:#1e88d6;letter-spacing:-0.3px">123</div>
<div class="t" style="left:416px;top:592.84px;font-size:12px;color:;letter-spacing:-0.3px">销售金额（元）</div>
<svg class="ab" style="left:523px;top:595px;" width="11" height="6" viewBox="0 0 11 6"><path d="M0 0H11L5.5 5.5Z" fill="#1e88d6"/></svg>
<div class="t" style="left:544.5px;top:592.61px;font-size:10.5px;color:#1e88d6;letter-spacing:-0.3px">123</div>
<div class="t" style="left:564px;top:592.84px;font-size:12px;color:;letter-spacing:-0.3px">运费金额（元）</div>
<svg class="ab" style="left:671px;top:595px;" width="11" height="6" viewBox="0 0 11 6"><path d="M0 0H11L5.5 5.5Z" fill="#1e88d6"/></svg>
<div class="t" style="left:692.5px;top:592.61px;font-size:10.5px;color:#1e88d6;letter-spacing:-0.3px">123</div>
<div class="t" style="left:712px;top:592.84px;font-size:12px;color:;letter-spacing:-0.3px">退货金额（元）</div>
<svg class="ab" style="left:819px;top:595px;" width="11" height="6" viewBox="0 0 11 6"><path d="M0 0H11L5.5 5.5Z" fill="#1e88d6"/></svg>
<div class="t" style="left:840.5px;top:592.61px;font-size:10.5px;color:#1e88d6;letter-spacing:-0.3px">123</div>
<div class="t" style="left:860px;top:592.84px;font-size:12px;color:;letter-spacing:-0.3px">退货运费金额（元）</div>
<svg class="ab" style="left:991px;top:595px;" width="11" height="6" viewBox="0 0 11 6"><path d="M0 0H11L5.5 5.5Z" fill="#1e88d6"/></svg>
<div class="t" style="left:1012.5px;top:592.61px;font-size:10.5px;color:#1e88d6;letter-spacing:-0.3px">123</div>
<div class="t" style="left:1032px;top:592.84px;font-size:12px;color:;letter-spacing:-0.3px">发货调整金额（元）</div>
<svg class="ab" style="left:1163px;top:595px;" width="11" height="6" viewBox="0 0 11 6"><path d="M0 0H11L5.5 5.5Z" fill="#1e88d6"/></svg>
<div class="t" style="left:1184.5px;top:592.61px;font-size:10.5px;color:#1e88d6;letter-spacing:-0.3px">123</div>
<div class="t" style="left:1204px;top:592.84px;font-size:12px;color:;letter-spacing:-0.3px">净销售金额（元）</div>
<svg class="ab" style="left:1323px;top:595px;" width="11" height="6" viewBox="0 0 11 6"><path d="M0 0H11L5.5 5.5Z" fill="#1e88d6"/></svg>
<div class="ab" style="left:49px;top:613px;width:29px;height:188px;background:#f5f5f5;"></div>
<div class="ab" style="left:79px;top:613px;width:1259px;height:20px;background:#bed9ef;"></div>
<div class="ab" style="left:1339px;top:633px;width:219px;height:1px;background:#efefef;"></div>
<div class="ab" style="left:49px;top:633px;width:29px;height:1px;background:#4a4a4a;"></div>
<div class="ab" style="left:49px;top:613px;width:29px;height:20px;background:#7dbaed;"></div>
<div class="t" style="left:53px;top:616.83px;font-size:12.6px;color:#000;">1</div>
<div class="t" style="left:85px;top:616.50px;font-size:12.4px;color:#000;">2022</div>
<div class="t" style="left:173px;top:616.50px;font-size:12.4px;color:#000;">HLA</div>
<div class="t" style="left:285px;top:616.50px;font-size:12.4px;color:#000;">海澜之家</div>
<div class="t" style="right:1068px;top:616.50px;font-size:12.4px;color:#000;text-align:right;">2,667,241,564.67</div>
<div class="t" style="right:920px;top:616.50px;font-size:12.4px;color:#000;text-align:right;">123,318.8</div>
<div class="t" style="right:772px;top:616.50px;font-size:12.4px;color:#000;text-align:right;">-473,957,553.42</div>
<div class="t" style="right:600px;top:616.50px;font-size:12.4px;color:#000;text-align:right;">0</div>
<div class="t" style="right:428px;top:616.50px;font-size:12.4px;color:#000;text-align:right;">-22,675,002.48</div>
<div class="t" style="right:268px;top:616.50px;font-size:12.4px;color:#000;text-align:right;">2,170,732,327.57</div>
<div class="ab" style="left:166px;top:613px;width:1px;height:20px;background:#f0f0f0;"></div>
<div class="ab" style="left:278px;top:613px;width:1px;height:20px;background:#f0f0f0;"></div>
<div class="ab" style="left:390px;top:613px;width:1px;height:20px;background:#f0f0f0;"></div>
<div class="ab" style="left:538px;top:613px;width:1px;height:20px;background:#f0f0f0;"></div>
<div class="ab" style="left:686px;top:613px;width:1px;height:20px;background:#f0f0f0;"></div>
<div class="ab" style="left:834px;top:613px;width:1px;height:20px;background:#f0f0f0;"></div>
<div class="ab" style="left:1006px;top:613px;width:1px;height:20px;background:#f0f0f0;"></div>
<div class="ab" style="left:1178px;top:613px;width:1px;height:20px;background:#f0f0f0;"></div>
<div class="ab" style="left:1338px;top:613px;width:1px;height:20px;background:#f0f0f0;"></div>
<div class="ab" style="left:79px;top:634px;width:1259px;height:20px;background:#fff;"></div>
<div class="ab" style="left:79px;top:633px;width:1259px;height:1px;background:#f3f3f3;"></div>
<div class="ab" style="left:1339px;top:654px;width:219px;height:1px;background:#efefef;"></div>
<div class="ab" style="left:49px;top:654px;width:29px;height:1px;background:#4a4a4a;"></div>
<div class="t" style="left:53px;top:637.83px;font-size:12.6px;color:#000;">2</div>
<div class="t" style="left:85px;top:637.50px;font-size:12.4px;color:#000;">2022</div>
<div class="t" style="left:173px;top:637.50px;font-size:12.4px;color:#000;">YEO</div>
<div class="t" style="left:285px;top:637.50px;font-size:12.4px;color:#000;">英式</div>
<div class="t" style="right:1068px;top:637.50px;font-size:12.4px;color:#000;text-align:right;">353,683,009.05</div>
<div class="t" style="right:920px;top:637.50px;font-size:12.4px;color:#000;text-align:right;">314,612.72</div>
<div class="t" style="right:772px;top:637.50px;font-size:12.4px;color:#000;text-align:right;">-49,057,876.11</div>
<div class="t" style="right:600px;top:637.50px;font-size:12.4px;color:#000;text-align:right;">0</div>
<div class="t" style="right:428px;top:637.50px;font-size:12.4px;color:#000;text-align:right;">-5,049,957.12</div>
<div class="t" style="right:268px;top:637.50px;font-size:12.4px;color:#000;text-align:right;">299,889,788.54</div>
<div class="ab" style="left:166px;top:634px;width:1px;height:20px;background:#f0f0f0;"></div>
<div class="ab" style="left:278px;top:634px;width:1px;height:20px;background:#f0f0f0;"></div>
<div class="ab" style="left:390px;top:634px;width:1px;height:20px;background:#f0f0f0;"></div>
<div class="ab" style="left:538px;top:634px;width:1px;height:20px;background:#f0f0f0;"></div>
<div class="ab" style="left:686px;top:634px;width:1px;height:20px;background:#f0f0f0;"></div>
<div class="ab" style="left:834px;top:634px;width:1px;height:20px;background:#f0f0f0;"></div>
<div class="ab" style="left:1006px;top:634px;width:1px;height:20px;background:#f0f0f0;"></div>
<div class="ab" style="left:1178px;top:634px;width:1px;height:20px;background:#f0f0f0;"></div>
<div class="ab" style="left:1338px;top:634px;width:1px;height:20px;background:#f0f0f0;"></div>
<div class="ab" style="left:79px;top:655px;width:1259px;height:20px;background:#e2ebf6;"></div>
<div class="ab" style="left:79px;top:654px;width:1259px;height:1px;background:#f3f3f3;"></div>
<div class="ab" style="left:1339px;top:675px;width:219px;height:1px;background:#efefef;"></div>
<div class="ab" style="left:49px;top:675px;width:29px;height:1px;background:#4a4a4a;"></div>
<div class="t" style="left:53px;top:658.83px;font-size:12.6px;color:#000;">3</div>
<div class="t" style="left:85px;top:658.50px;font-size:12.4px;color:#000;">2022</div>
<div class="t" style="left:173px;top:658.50px;font-size:12.4px;color:#000;">OVV</div>
<div class="t" style="left:285px;top:658.50px;font-size:12.4px;color:#000;">OVV</div>
<div class="t" style="right:1068px;top:658.50px;font-size:12.4px;color:#000;text-align:right;">119,106,764.14</div>
<div class="t" style="right:920px;top:658.50px;font-size:12.4px;color:#000;text-align:right;">0</div>
<div class="t" style="right:772px;top:658.50px;font-size:12.4px;color:#000;text-align:right;">-64,393,056.35</div>
<div class="t" style="right:600px;top:658.50px;font-size:12.4px;color:#000;text-align:right;">0</div>
<div class="t" style="right:428px;top:658.50px;font-size:12.4px;color:#000;text-align:right;">-1,702,202.33</div>
<div class="t" style="right:268px;top:658.50px;font-size:12.4px;color:#000;text-align:right;">53,011,505.46</div>
<div class="ab" style="left:166px;top:655px;width:1px;height:20px;background:#f0f0f0;"></div>
<div class="ab" style="left:278px;top:655px;width:1px;height:20px;background:#f0f0f0;"></div>
<div class="ab" style="left:390px;top:655px;width:1px;height:20px;background:#f0f0f0;"></div>
<div class="ab" style="left:538px;top:655px;width:1px;height:20px;background:#f0f0f0;"></div>
<div class="ab" style="left:686px;top:655px;width:1px;height:20px;background:#f0f0f0;"></div>
<div class="ab" style="left:834px;top:655px;width:1px;height:20px;background:#f0f0f0;"></div>
<div class="ab" style="left:1006px;top:655px;width:1px;height:20px;background:#f0f0f0;"></div>
<div class="ab" style="left:1178px;top:655px;width:1px;height:20px;background:#f0f0f0;"></div>
<div class="ab" style="left:1338px;top:655px;width:1px;height:20px;background:#f0f0f0;"></div>
<div class="ab" style="left:79px;top:676px;width:1259px;height:20px;background:#fff;"></div>
<div class="ab" style="left:79px;top:675px;width:1259px;height:1px;background:#f3f3f3;"></div>
<div class="ab" style="left:1339px;top:696px;width:219px;height:1px;background:#efefef;"></div>
<div class="ab" style="left:49px;top:696px;width:29px;height:1px;background:#4a4a4a;"></div>
<div class="t" style="left:53px;top:679.83px;font-size:12.6px;color:#000;">4</div>
<div class="t" style="left:85px;top:679.50px;font-size:12.4px;color:#000;">2022</div>
<div class="t" style="left:173px;top:679.50px;font-size:12.4px;color:#000;">HLM</div>
<div class="t" style="left:285px;top:679.50px;font-size:12.4px;color:#000;">海澜优选</div>
<div class="t" style="right:1068px;top:679.50px;font-size:12.4px;color:#000;text-align:right;">61,616,744.12</div>
<div class="t" style="right:920px;top:679.50px;font-size:12.4px;color:#000;text-align:right;">0</div>
<div class="t" style="right:772px;top:679.50px;font-size:12.4px;color:#000;text-align:right;">-14,720,829.32</div>
<div class="t" style="right:600px;top:679.50px;font-size:12.4px;color:#000;text-align:right;">0</div>
<div class="t" style="right:428px;top:679.50px;font-size:12.4px;color:#000;text-align:right;">-147,662.21</div>
<div class="t" style="right:268px;top:679.50px;font-size:12.4px;color:#000;text-align:right;">46,748,252.59</div>
<div class="ab" style="left:166px;top:676px;width:1px;height:20px;background:#f0f0f0;"></div>
<div class="ab" style="left:278px;top:676px;width:1px;height:20px;background:#f0f0f0;"></div>
<div class="ab" style="left:390px;top:676px;width:1px;height:20px;background:#f0f0f0;"></div>
<div class="ab" style="left:538px;top:676px;width:1px;height:20px;background:#f0f0f0;"></div>
<div class="ab" style="left:686px;top:676px;width:1px;height:20px;background:#f0f0f0;"></div>
<div class="ab" style="left:834px;top:676px;width:1px;height:20px;background:#f0f0f0;"></div>
<div class="ab" style="left:1006px;top:676px;width:1px;height:20px;background:#f0f0f0;"></div>
<div class="ab" style="left:1178px;top:676px;width:1px;height:20px;background:#f0f0f0;"></div>
<div class="ab" style="left:1338px;top:676px;width:1px;height:20px;background:#f0f0f0;"></div>
<div class="ab" style="left:79px;top:697px;width:1259px;height:20px;background:#e2ebf6;"></div>
<div class="ab" style="left:79px;top:696px;width:1259px;height:1px;background:#f3f3f3;"></div>
<div class="ab" style="left:1339px;top:717px;width:219px;height:1px;background:#efefef;"></div>
<div class="ab" style="left:49px;top:717px;width:29px;height:1px;background:#4a4a4a;"></div>
<div class="t" style="left:53px;top:700.83px;font-size:12.6px;color:#000;">5</div>
<div class="t" style="left:85px;top:700.50px;font-size:12.4px;color:#000;">2022</div>
<div class="t" style="left:173px;top:700.50px;font-size:12.4px;color:#000;">NCL</div>
<div class="t" style="left:285px;top:700.50px;font-size:12.4px;color:#000;">男生女生</div>
<div class="t" style="right:1068px;top:700.50px;font-size:12.4px;color:#000;text-align:right;">56,798,110.46</div>
<div class="t" style="right:920px;top:700.50px;font-size:12.4px;color:#000;text-align:right;">12,162.26</div>
<div class="t" style="right:772px;top:700.50px;font-size:12.4px;color:#000;text-align:right;">-10,280,020.42</div>
<div class="t" style="right:600px;top:700.50px;font-size:12.4px;color:#000;text-align:right;">0</div>
<div class="t" style="right:428px;top:700.50px;font-size:12.4px;color:#000;text-align:right;">-402,623.89</div>
<div class="t" style="right:268px;top:700.50px;font-size:12.4px;color:#000;text-align:right;">46,127,628.41</div>
<div class="ab" style="left:166px;top:697px;width:1px;height:20px;background:#f0f0f0;"></div>
<div class="ab" style="left:278px;top:697px;width:1px;height:20px;background:#f0f0f0;"></div>
<div class="ab" style="left:390px;top:697px;width:1px;height:20px;background:#f0f0f0;"></div>
<div class="ab" style="left:538px;top:697px;width:1px;height:20px;background:#f0f0f0;"></div>
<div class="ab" style="left:686px;top:697px;width:1px;height:20px;background:#f0f0f0;"></div>
<div class="ab" style="left:834px;top:697px;width:1px;height:20px;background:#f0f0f0;"></div>
<div class="ab" style="left:1006px;top:697px;width:1px;height:20px;background:#f0f0f0;"></div>
<div class="ab" style="left:1178px;top:697px;width:1px;height:20px;background:#f0f0f0;"></div>
<div class="ab" style="left:1338px;top:697px;width:1px;height:20px;background:#f0f0f0;"></div>
<div class="ab" style="left:79px;top:718px;width:1259px;height:20px;background:#fff;"></div>
<div class="ab" style="left:79px;top:717px;width:1259px;height:1px;background:#f3f3f3;"></div>
<div class="ab" style="left:1339px;top:738px;width:219px;height:1px;background:#efefef;"></div>
<div class="ab" style="left:49px;top:738px;width:29px;height:1px;background:#4a4a4a;"></div>
<div class="t" style="left:53px;top:721.83px;font-size:12.6px;color:#000;">6</div>
<div class="t" style="left:85px;top:721.50px;font-size:12.4px;color:#000;">2022</div>
<div class="t" style="left:173px;top:721.50px;font-size:12.4px;color:#000;">HJS</div>
<div class="t" style="left:285px;top:721.50px;font-size:12.4px;color:#000;">黑鲸</div>
<div class="t" style="right:1068px;top:721.50px;font-size:12.4px;color:#000;text-align:right;">7,414,532.46</div>
<div class="t" style="right:920px;top:721.50px;font-size:12.4px;color:#000;text-align:right;">76</div>
<div class="t" style="right:772px;top:721.50px;font-size:12.4px;color:#000;text-align:right;">-2,095,158.48</div>
<div class="t" style="right:600px;top:721.50px;font-size:12.4px;color:#000;text-align:right;">0</div>
<div class="t" style="right:428px;top:721.50px;font-size:12.4px;color:#000;text-align:right;">-387,646.15</div>
<div class="t" style="right:268px;top:721.50px;font-size:12.4px;color:#000;text-align:right;">4,931,803.83</div>
<div class="ab" style="left:166px;top:718px;width:1px;height:20px;background:#f0f0f0;"></div>
<div class="ab" style="left:278px;top:718px;width:1px;height:20px;background:#f0f0f0;"></div>
<div class="ab" style="left:390px;top:718px;width:1px;height:20px;background:#f0f0f0;"></div>
<div class="ab" style="left:538px;top:718px;width:1px;height:20px;background:#f0f0f0;"></div>
<div class="ab" style="left:686px;top:718px;width:1px;height:20px;background:#f0f0f0;"></div>
<div class="ab" style="left:834px;top:718px;width:1px;height:20px;background:#f0f0f0;"></div>
<div class="ab" style="left:1006px;top:718px;width:1px;height:20px;background:#f0f0f0;"></div>
<div class="ab" style="left:1178px;top:718px;width:1px;height:20px;background:#f0f0f0;"></div>
<div class="ab" style="left:1338px;top:718px;width:1px;height:20px;background:#f0f0f0;"></div>
<div class="ab" style="left:79px;top:739px;width:1259px;height:20px;background:#e2ebf6;"></div>
<div class="ab" style="left:79px;top:738px;width:1259px;height:1px;background:#f3f3f3;"></div>
<div class="ab" style="left:1339px;top:759px;width:219px;height:1px;background:#efefef;"></div>
<div class="ab" style="left:49px;top:759px;width:29px;height:1px;background:#4a4a4a;"></div>
<div class="t" style="left:53px;top:742.83px;font-size:12.6px;color:#000;">7</div>
<div class="t" style="left:85px;top:742.50px;font-size:12.4px;color:#000;">2022</div>
<div class="t" style="left:173px;top:742.50px;font-size:12.4px;color:#000;">BES</div>
<div class="t" style="left:285px;top:742.50px;font-size:12.4px;color:#000;">海一家</div>
<div class="t" style="right:1068px;top:742.50px;font-size:12.4px;color:#000;text-align:right;">4,038,537.99</div>
<div class="t" style="right:920px;top:742.50px;font-size:12.4px;color:#000;text-align:right;">0</div>
<div class="t" style="right:772px;top:742.50px;font-size:12.4px;color:#000;text-align:right;">-499,314.27</div>
<div class="t" style="right:600px;top:742.50px;font-size:12.4px;color:#000;text-align:right;">0</div>
<div class="t" style="right:428px;top:742.50px;font-size:12.4px;color:#000;text-align:right;">2,504.83</div>
<div class="t" style="right:268px;top:742.50px;font-size:12.4px;color:#000;text-align:right;">3,541,728.55</div>
<div class="ab" style="left:166px;top:739px;width:1px;height:20px;background:#f0f0f0;"></div>
<div class="ab" style="left:278px;top:739px;width:1px;height:20px;background:#f0f0f0;"></div>
<div class="ab" style="left:390px;top:739px;width:1px;height:20px;background:#f0f0f0;"></div>
<div class="ab" style="left:538px;top:739px;width:1px;height:20px;background:#f0f0f0;"></div>
<div class="ab" style="left:686px;top:739px;width:1px;height:20px;background:#f0f0f0;"></div>
<div class="ab" style="left:834px;top:739px;width:1px;height:20px;background:#f0f0f0;"></div>
<div class="ab" style="left:1006px;top:739px;width:1px;height:20px;background:#f0f0f0;"></div>
<div class="ab" style="left:1178px;top:739px;width:1px;height:20px;background:#f0f0f0;"></div>
<div class="ab" style="left:1338px;top:739px;width:1px;height:20px;background:#f0f0f0;"></div>
<div class="ab" style="left:79px;top:760px;width:1259px;height:20px;background:#fff;"></div>
<div class="ab" style="left:79px;top:759px;width:1259px;height:1px;background:#f3f3f3;"></div>
<div class="ab" style="left:1339px;top:780px;width:219px;height:1px;background:#efefef;"></div>
<div class="ab" style="left:49px;top:780px;width:29px;height:1px;background:#4a4a4a;"></div>
<div class="t" style="left:53px;top:763.83px;font-size:12.6px;color:#000;">8</div>
<div class="t" style="left:85px;top:763.50px;font-size:12.4px;color:#000;">2022</div>
<div class="t" style="left:173px;top:763.50px;font-size:12.4px;color:#000;">HLP</div>
<div class="t" style="left:285px;top:763.50px;font-size:12.4px;color:#000;">HLA PLUS</div>
<div class="t" style="right:1068px;top:763.50px;font-size:12.4px;color:#000;text-align:right;">1,196,271.26</div>
<div class="t" style="right:920px;top:763.50px;font-size:12.4px;color:#000;text-align:right;">0</div>
<div class="t" style="right:772px;top:763.50px;font-size:12.4px;color:#000;text-align:right;">-491,511.38</div>
<div class="t" style="right:600px;top:763.50px;font-size:12.4px;color:#000;text-align:right;">0</div>
<div class="t" style="right:428px;top:763.50px;font-size:12.4px;color:#000;text-align:right;">-3,965.99</div>
<div class="t" style="right:268px;top:763.50px;font-size:12.4px;color:#000;text-align:right;">700,793.89</div>
<div class="ab" style="left:166px;top:760px;width:1px;height:20px;background:#f0f0f0;"></div>
<div class="ab" style="left:278px;top:760px;width:1px;height:20px;background:#f0f0f0;"></div>
<div class="ab" style="left:390px;top:760px;width:1px;height:20px;background:#f0f0f0;"></div>
<div class="ab" style="left:538px;top:760px;width:1px;height:20px;background:#f0f0f0;"></div>
<div class="ab" style="left:686px;top:760px;width:1px;height:20px;background:#f0f0f0;"></div>
<div class="ab" style="left:834px;top:760px;width:1px;height:20px;background:#f0f0f0;"></div>
<div class="ab" style="left:1006px;top:760px;width:1px;height:20px;background:#f0f0f0;"></div>
<div class="ab" style="left:1178px;top:760px;width:1px;height:20px;background:#f0f0f0;"></div>
<div class="ab" style="left:1338px;top:760px;width:1px;height:20px;background:#f0f0f0;"></div>
<div class="ab" style="left:79px;top:781px;width:1259px;height:20px;background:#e2ebf6;"></div>
<div class="ab" style="left:79px;top:780px;width:1259px;height:1px;background:#f3f3f3;"></div>
<div class="ab" style="left:1339px;top:801px;width:219px;height:1px;background:#efefef;"></div>
<div class="ab" style="left:49px;top:801px;width:29px;height:1px;background:#4a4a4a;"></div>
<div class="t" style="left:53px;top:784.83px;font-size:12.6px;color:#000;">9</div>
<div class="t" style="left:85px;top:784.50px;font-size:12.4px;color:#000;">2022</div>
<div class="t" style="left:173px;top:784.50px;font-size:12.4px;color:#000;">HED</div>
<div class="t" style="left:285px;top:784.50px;font-size:12.4px;color:#000;">HEAD</div>
<div class="t" style="right:1068px;top:784.50px;font-size:12.4px;color:#000;text-align:right;">392,584.34</div>
<div class="t" style="right:920px;top:784.50px;font-size:12.4px;color:#000;text-align:right;">0</div>
<div class="t" style="right:772px;top:784.50px;font-size:12.4px;color:#000;text-align:right;">-35,940.01</div>
<div class="t" style="right:600px;top:784.50px;font-size:12.4px;color:#000;text-align:right;">0</div>
<div class="t" style="right:428px;top:784.50px;font-size:12.4px;color:#000;text-align:right;">-27,662.23</div>
<div class="t" style="right:268px;top:784.50px;font-size:12.4px;color:#000;text-align:right;">328,982.1</div>
<div class="ab" style="left:166px;top:781px;width:1px;height:20px;background:#f0f0f0;"></div>
<div class="ab" style="left:278px;top:781px;width:1px;height:20px;background:#f0f0f0;"></div>
<div class="ab" style="left:390px;top:781px;width:1px;height:20px;background:#f0f0f0;"></div>
<div class="ab" style="left:538px;top:781px;width:1px;height:20px;background:#f0f0f0;"></div>
<div class="ab" style="left:686px;top:781px;width:1px;height:20px;background:#f0f0f0;"></div>
<div class="ab" style="left:834px;top:781px;width:1px;height:20px;background:#f0f0f0;"></div>
<div class="ab" style="left:1006px;top:781px;width:1px;height:20px;background:#f0f0f0;"></div>
<div class="ab" style="left:1178px;top:781px;width:1px;height:20px;background:#f0f0f0;"></div>
<div class="ab" style="left:1338px;top:781px;width:1px;height:20px;background:#f0f0f0;"></div>
<div class="ab" style="left:78px;top:613px;width:1px;height:188px;background:#4a4a4a;"></div>
<div class="ab" style="left:1338px;top:584px;width:1px;height:28px;background:#8c8c8c;"></div>
<div class="ab" style="left:79px;top:613px;width:87px;height:20px;background:#6eb0e8;border:2px solid #1a1a1a"></div>
<div class="t" style="left:84px;top:616.50px;font-size:12.4px;color:#fff;">2022</div>
<div class="ab" style="left:1558px;top:584px;width:16px;height:217px;background:#f5f5f5;"></div>
<svg class="ab" style="left:1561px;top:590px;" width="10" height="7" viewBox="0 0 10 7"><path d="M1 6L5 2L9 6" stroke="#555" stroke-width="1.6" fill="none"/></svg>
<div class="ab" style="left:1558px;top:601px;width:15px;height:39px;background:#cdd0cd;"></div>
<svg class="ab" style="left:1561px;top:790px;" width="10" height="7" viewBox="0 0 10 7"><path d="M1 1L5 5L9 1" stroke="#555" stroke-width="1.6" fill="none"/></svg>
<svg class="ab" style="left:1580px;top:592px;" width="15" height="15" viewBox="0 0 15 15"><rect x="4" y="0.5" width="10.5" height="11" fill="#fff" stroke="#1e88d6"/><rect x="8" y="1" width="6" height="10" fill="#1e88d6"/><circle cx="3.5" cy="11.5" r="3" fill="#1e88d6"/></svg>
<div class="t" style="left:1587px;top:621px;font-size:12.5px;transform:translate(-50%,-50%) rotate(90deg)">面板</div>
<svg class="ab" style="left:1578px;top:651px;" width="15" height="14" viewBox="0 0 15 14"><rect x="0.5" y="0.5" width="14" height="13" fill="#fff" stroke="#1e88d6"/><rect x="0.5" y="0.5" width="14" height="3" fill="#1e88d6"/><path d="M2 6H4M6 6H8M10 6H12M3 8H5M7 8H9M11 8H13M2 10H4M6 10H8M10 10H12" stroke="#1e88d6" stroke-width="1.3"/></svg>
<svg class="ab" style="left:1578px;top:672px;" width="15" height="15" viewBox="0 0 15 15"><circle cx="7.5" cy="7.5" r="6.5" fill="#fff" stroke="#1e88d6" stroke-width="1.3"/><circle cx="5.5" cy="5.5" r="1" fill="#1e88d6"/><circle cx="9.5" cy="5.5" r="1" fill="#1e88d6"/><circle cx="5.5" cy="9.5" r="1" fill="#1e88d6"/><circle cx="9.5" cy="9.5" r="1" fill="#1e88d6"/></svg>
<svg class="ab" style="left:1578px;top:694px;" width="15" height="16" viewBox="0 0 15 16"><rect x="0.5" y="4.5" width="14" height="11" fill="#fff" stroke="#1e88d6"/><path d="M0.5 8.5H14.5M0.5 12H14.5M4.5 4.5V15.5M10.5 4.5V15.5" stroke="#1e88d6"/><rect x="6" y="3" width="3" height="13" fill="#f08c00"/><path d="M7.5 0V3" stroke="#f08c00"/></svg>
<svg class="ab" style="left:1578px;top:716px;" width="15" height="15" viewBox="0 0 15 15"><rect x="0.5" y="0.5" width="14" height="14" fill="#fff" stroke="#1e88d6"/><rect x="0.5" y="0.5" width="14" height="3" fill="#1e88d6"/><rect x="2" y="5" width="6" height="4" fill="#1e88d6"/><path d="M10 10V14M9 10H11M9 14H11" stroke="#1e88d6"/></svg>
<svg class="ab" style="left:1578px;top:738px;" width="15" height="15" viewBox="0 0 15 15"><circle cx="3.5" cy="3.5" r="3" fill="#1e88d6"/><circle cx="11.5" cy="3.5" r="3" fill="#1e88d6"/><circle cx="3.5" cy="11.5" r="3" fill="#1e88d6"/><circle cx="11.5" cy="11.5" r="3" fill="#f08c00"/><path d="M2 3.5H5M10 3.5H13M11.5 2V5M2 10L5 13M5 10L2 13M10 11H13M10 12.5H13" stroke="#fff" stroke-width="0.8"/></svg>
<svg class="ab" style="left:58px;top:808px;" width="17" height="17" viewBox="0 0 17 17"><g transform="rotate(-40 8.5 8.5)"><path d="M3 8A5.5 4.5 0 0 1 13 6.5" stroke="#2a9ad8" stroke-width="2" fill="none"/><path d="M14 9A5.5 4.5 0 0 1 4 10.5" stroke="#2a9ad8" stroke-width="2" fill="none"/><path d="M11 3.5L15 6.5L11 9Z M6 13.5L2 10.5L6 8Z" fill="#2a9ad8"/></g></svg>
<div class="t" style="left:78px;top:812.42px;font-size:12.5px;color:#000;">刷新</div>
<svg class="ab" style="left:117px;top:816px;" width="8" height="5" viewBox="0 0 8 5"><path d="M0 0H8L4 4.5Z" fill="#1a1a1a"/></svg>
<svg class="ab" style="left:134px;top:810px;" width="2" height="15" viewBox="0 0 2 15"><rect x="0" y="0" width="2" height="2" fill="#b5ad96"/><rect x="0" y="4" width="2" height="2" fill="#b5ad96"/><rect x="0" y="8" width="2" height="2" fill="#b5ad96"/><rect x="0" y="12" width="2" height="2" fill="#b5ad96"/></svg>
<svg class="ab" style="left:145px;top:809px;" width="16" height="16" viewBox="0 0 16 16"><circle cx="8" cy="8" r="7" fill="none" stroke="#aaa" stroke-width="1.2"/><path d="M4.5 8L7 10.5L11.5 5.5" stroke="#aaa" stroke-width="1.3" fill="none"/></svg>
<div class="t" style="left:165.5px;top:812.42px;font-size:12.5px;color:#9a9a9a;">保存</div>
<svg class="ab" style="left:203px;top:816px;" width="8" height="5" viewBox="0 0 8 5"><path d="M0 0H8L4 4.5Z" fill="#777"/></svg>
<svg class="ab" style="left:220px;top:810px;" width="14" height="14" viewBox="0 0 14 14"><rect x="0.5" y="0.5" width="13" height="13" fill="none" stroke="#aaa"/><path d="M3.5 3.5L10.5 10.5M10.5 3.5L3.5 10.5" stroke="#aaa"/></svg>
<div class="t" style="left:238.5px;top:812.42px;font-size:12.5px;color:#9a9a9a;">取消</div>
<div class="ab" style="left:274px;top:804px;width:1px;height:26px;background:#7a7a7a;"></div>
<svg class="ab" style="left:283px;top:810px;" width="17" height="14" viewBox="0 0 17 14"><path d="M0 1.5H13M0 5.5H13M0 9.5H7M0 13H5" stroke="#2a9ad8" stroke-width="1.6"/><path d="M9 13L15 7" stroke="#2a9ad8" stroke-width="2.2"/></svg>
<svg class="ab" style="left:308px;top:810px;" width="16" height="14" viewBox="0 0 16 14"><path d="M0 1.5H13M0 5.5H8M0 9.5H7M0 13H5" stroke="#999" stroke-width="1.6"/><path d="M9 9.5H16M12.5 6V13" stroke="#999" stroke-width="1.6"/></svg>
<svg class="ab" style="left:331px;top:810px;" width="16" height="14" viewBox="0 0 16 14"><path d="M0 1.5H13M0 5.5H3M0 9.5H3M0 13H13" stroke="#999" stroke-width="1.6"/><circle cx="10" cy="7.5" r="4" fill="none" stroke="#999"/><path d="M10 5.5V9.5M8 7.5H12" stroke="#999"/></svg>
<svg class="ab" style="left:355px;top:810px;" width="17" height="14" viewBox="0 0 17 14"><path d="M0 1.5H13M0 5.5H8M0 9.5H13M0 13H5" stroke="#999" stroke-width="1.6"/><path d="M10 5.5H16" stroke="#999" stroke-width="1.6"/></svg>
<svg class="ab" style="left:379px;top:810px;" width="2" height="15" viewBox="0 0 2 15"><rect x="0" y="0" width="2" height="2" fill="#b5ad96"/><rect x="0" y="4" width="2" height="2" fill="#b5ad96"/><rect x="0" y="8" width="2" height="2" fill="#b5ad96"/><rect x="0" y="12" width="2" height="2" fill="#b5ad96"/></svg>
<svg class="ab" style="left:387px;top:810px;" width="13" height="15" viewBox="0 0 13 15"><path d="M1 1V14" stroke="#999" stroke-width="1.6"/><path d="M11 1L4.5 7.5L11 14" stroke="#999" stroke-width="1.6" fill="none"/></svg>
<svg class="ab" style="left:412px;top:810px;" width="10" height="15" viewBox="0 0 10 15"><path d="M9 1L2.5 7.5L9 14" stroke="#999" stroke-width="1.6" fill="none"/></svg>
<svg class="ab" style="left:437px;top:810px;" width="10" height="15" viewBox="0 0 10 15"><path d="M1 1L7.5 7.5L1 14" stroke="#2a9ad8" stroke-width="1.8" fill="none"/></svg>
<svg class="ab" style="left:457px;top:810px;" width="13" height="15" viewBox="0 0 13 15"><path d="M1 1L7.5 7.5L1 14" stroke="#2a9ad8" stroke-width="1.8" fill="none"/><path d="M11.5 1V14" stroke="#2a9ad8" stroke-width="1.8"/></svg>
<svg class="ab" style="left:478px;top:810px;" width="16" height="15" viewBox="0 0 16 15"><path d="M1 4V1H4M12 1H15V4M15 11V14H12M4 14H1V11" stroke="#aaa" stroke-width="1.1" fill="none"/><rect x="5" y="4" width="6" height="7" fill="none" stroke="#aaa"/></svg>
<svg class="ab" style="left:503px;top:810px;" width="2" height="15" viewBox="0 0 2 15"><rect x="0" y="0" width="2" height="2" fill="#b5ad96"/><rect x="0" y="4" width="2" height="2" fill="#b5ad96"/><rect x="0" y="8" width="2" height="2" fill="#b5ad96"/><rect x="0" y="12" width="2" height="2" fill="#b5ad96"/></svg>
<svg class="ab" style="left:517px;top:809px;" width="14" height="16" viewBox="0 0 14 16"><path d="M7 13V2M2.5 6L7 1.5L11.5 6" stroke="#2a9ad8" stroke-width="1.7" fill="none"/><path d="M1 10V15H13V10" stroke="#2a9ad8" stroke-width="1.4" fill="none"/></svg>
<div class="t" style="left:536px;top:812.42px;font-size:12.5px;color:#000;">导出数据...</div>
<svg class="ab" style="left:607px;top:816px;" width="8" height="5" viewBox="0 0 8 5"><path d="M0 0H8L4 4.5Z" fill="#1a1a1a"/></svg>
<svg class="ab" style="left:624px;top:810px;" width="2" height="15" viewBox="0 0 2 15"><rect x="0" y="0" width="2" height="2" fill="#b5ad96"/><rect x="0" y="4" width="2" height="2" fill="#b5ad96"/><rect x="0" y="8" width="2" height="2" fill="#b5ad96"/><rect x="0" y="12" width="2" height="2" fill="#b5ad96"/></svg>
<svg class="ab" style="left:631px;top:809px;" width="16" height="16" viewBox="0 0 16 16"><circle cx="8" cy="8" r="5.2" fill="#1e88d6"/><path d="M8 1V15M1 8H15M3 3L13 13M13 3L3 13" stroke="#1e88d6" stroke-width="2.6"/><circle cx="8" cy="8" r="2" fill="#f5f5f5"/></svg>
<div class="ab" style="left:654px;top:806px;width:54px;height:23px;background:#fff;border:1px solid #8c8c8c"></div>
<div class="t" style="left:657px;top:812.16px;font-size:12.8px;color:#000;">200</div>
<svg class="ab" style="left:714px;top:809px;" width="16" height="16" viewBox="0 0 16 16"><path d="M2 1L8 7L14 1" stroke="#2a9ad8" stroke-width="1.8" fill="none"/><path d="M8 7V14" stroke="#2a9ad8" stroke-width="1.6"/><path d="M1 10V15H15V10" stroke="#2a9ad8" stroke-width="1.3" fill="none"/></svg>
<div class="t" style="left:737px;top:812.16px;font-size:12.8px;color:#000;">45</div>
<svg class="ab" style="left:758px;top:810px;" width="2" height="15" viewBox="0 0 2 15"><rect x="0" y="0" width="2" height="2" fill="#b5ad96"/><rect x="0" y="4" width="2" height="2" fill="#b5ad96"/><rect x="0" y="8" width="2" height="2" fill="#b5ad96"/><rect x="0" y="12" width="2" height="2" fill="#b5ad96"/></svg>
<div class="t" style="left:786px;top:811.53px;font-size:10px;color:#888;">···</div>
<div class="t" style="left:805px;top:811.33px;font-size:12.6px;color:#000;">45 行已获取 - 17.809s (1ms 获取), 2025-10-21 20:09:14</div>
<svg class="ab" style="left:1577px;top:815px;" width="16" height="15" viewBox="0 0 16 15"><path d="M1 3V14H8" stroke="#1e88d6" stroke-width="2.4" fill="none"/><path d="M5 3H11A3 3 0 0 1 11 9H8" stroke="#1e88d6" stroke-width="1.8" fill="none"/><path d="M11 1L14 3L11 5Z" fill="#1e88d6"/><rect x="8" y="9" width="7" height="5" fill="#1e88d6"/></svg>
<div class="ab" style="left:778px;top:834px;width:1px;height:22px;background:#a8a8a8;"></div>
<div class="ab" style="left:814px;top:834px;width:1px;height:22px;background:#a8a8a8;"></div>
<div class="ab" style="left:841px;top:834px;width:1px;height:22px;background:#a8a8a8;"></div>
<div class="ab" style="left:975px;top:834px;width:1px;height:22px;background:#a8a8a8;"></div>
<div class="ab" style="left:1103px;top:834px;width:1px;height:22px;background:#a8a8a8;"></div>
<div class="ab" style="left:1231px;top:834px;width:1px;height:22px;background:#a8a8a8;"></div>
<div class="t" style="left:786px;top:839.93px;font-size:11.9px;color:#000;">CST</div>
<div class="t" style="left:822px;top:839.33px;font-size:12.6px;color:#000;">zh</div>
<div class="t" style="left:850px;top:839.42px;font-size:12.5px;color:#000;">可写</div>
<div class="t" style="left:982.5px;top:839.42px;font-size:12.5px;color:#000;">智能插入</div>
<div class="t" style="left:1111px;top:839.25px;font-size:12.7px;color:#000;">376 : 1 : 15337</div>
<div class="t" style="left:1239px;top:839.42px;font-size:12.5px;color:#000;">Sel: 0 | 0</div>
<svg class="ab" style="left:1315px;top:840px;" width="2" height="15" viewBox="0 0 2 15"><rect x="0" y="0" width="2" height="2" fill="#b5ad96"/><rect x="0" y="4" width="2" height="2" fill="#b5ad96"/><rect x="0" y="8" width="2" height="2" fill="#b5ad96"/><rect x="0" y="12" width="2" height="2" fill="#b5ad96"/></svg>
<div class="ab" style="left:0px;top:860px;width:1600px;height:40px;background:#000;"></div>
<svg class="ab" style="left:16px;top:872px;" width="16" height="16" viewBox="0 0 16 16"><path d="M0 2.2L6.6 1.3V7.6H0ZM7.4 1.2L16 0V7.6H7.4ZM0 8.4H6.6V14.7L0 13.8ZM7.4 8.4H16V16L7.4 14.8Z" fill="#fff"/></svg>
<svg class="ab" style="left:64px;top:871px;" width="17" height="17" viewBox="0 0 17 17"><circle cx="10.5" cy="6.5" r="5.3" fill="none" stroke="#fff" stroke-width="1.4"/><path d="M6.5 10.5L1 16" stroke="#fff" stroke-width="1.6"/></svg>
<svg class="ab" style="left:111px;top:871px;" width="17" height="17" viewBox="0 0 17 17"><rect x="1.5" y="3.5" width="10" height="10" fill="none" stroke="#fff" stroke-width="1.3"/><path d="M0 1H13M0 16H13M15 1V16" stroke="#fff" stroke-width="1.3"/></svg>
<svg class="ab" style="left:160px;top:868px;" width="23" height="23" viewBox="0 0 23 23"><path d="M3 12A8.5 8.5 0 0 1 20 11.5H7.5A4.5 4.5 0 0 0 16.5 14H20.5A9 9 0 0 1 3 12Z" fill="#1ba1e2"/><path d="M7.5 9.5A4.5 4 0 0 1 16 9.5Z" fill="#000"/><path d="M1 18Q-1 22 6 20Q15 17 21 9Q24 3 20 3Q17 3 13 5" stroke="#f4c20d" stroke-width="1.6" fill="none"/></svg>
<svg class="ab" style="left:209px;top:870px;" width="23" height="21" viewBox="0 0 23 21"><path d="M0.5 2H8L10 4H22V19H0.5Z" fill="#f8d775"/><path d="M0.5 6H22V19H0.5Z" fill="#f1c24a"/><rect x="6" y="12" width="10" height="7" fill="#2a9ad8"/><rect x="9" y="15" width="4" height="4" fill="#f1c24a"/></svg>
<svg class="ab" style="left:257px;top:868px;" width="24" height="24" viewBox="0 0 24 24"><circle cx="12" cy="12" r="10.8" fill="#fbfbfb" stroke="#4ec3c8" stroke-width="2"/><path d="M4.5 15Q4.5 9 8 6.5Q11 4 14 4.5" stroke="#3a2e28" stroke-width="1" fill="none"/><path d="M4.5 14Q4.8 10.5 6.5 9.5L6 14Z" fill="#3a2e28"/><ellipse cx="15.5" cy="8.2" rx="2.1" ry="1.3" fill="#3a2e28"/><circle cx="10.5" cy="7.8" r="0.7" fill="#3a2e28"/><path d="M7 21.5L9 15.5Q11 13.5 13 15Q15 17 17.5 16L17 20Q13 23.5 7 21.5Z" fill="#3a2e28"/><path d="M15 12.5L14.5 15.5M16.3 12.5L16 15" stroke="#3a2e28" stroke-width="0.8"/></svg>
<div class="ab" style="left:294px;top:860px;width:48px;height:40px;background:#333;"></div>
<div class="ab" style="left:294px;top:898px;width:48px;height:2px;background:#76b9ed;"></div>
<svg class="ab" style="left:306px;top:868px;" width="24" height="24" viewBox="0 0 24 24"><circle cx="12" cy="12" r="10.8" fill="#fbfbfb" stroke="#4ec3c8" stroke-width="2"/><path d="M4.5 15Q4.5 9 8 6.5Q11 4 14 4.5" stroke="#3a2e28" stroke-width="1" fill="none"/><path d="M4.5 14Q4.8 10.5 6.5 9.5L6 14Z" fill="#3a2e28"/><ellipse cx="15.5" cy="8.2" rx="2.1" ry="1.3" fill="#3a2e28"/><circle cx="10.5" cy="7.8" r="0.7" fill="#3a2e28"/><path d="M7 21.5L9 15.5Q11 13.5 13 15Q15 17 17.5 16L17 20Q13 23.5 7 21.5Z" fill="#3a2e28"/><path d="M15 12.5L14.5 15.5M16.3 12.5L16 15" stroke="#3a2e28" stroke-width="0.8"/></svg>
<svg class="ab" style="left:1347px;top:874px;" width="14" height="9" viewBox="0 0 14 9"><path d="M1 8L7 2L13 8" stroke="#fff" stroke-width="1.3" fill="none"/></svg>
<svg class="ab" style="left:1373px;top:870px;" width="13" height="18" viewBox="0 0 13 18"><rect x="3" y="0.5" width="6" height="5" fill="none" stroke="#fff"/><rect x="1.5" y="5.5" width="9" height="12" rx="1" fill="none" stroke="#fff" stroke-width="1.2"/><path d="M8 15L10 17L13 13" stroke="#fff" fill="none"/></svg>
<svg class="ab" style="left:1394px;top:871px;" width="17" height="16" viewBox="0 0 17 16"><rect x="0.5" y="0.5" width="13" height="9" fill="none" stroke="#fff" stroke-width="1.2"/><path d="M7 10V13M3 13.5H11" stroke="#fff" stroke-width="1.2"/><path d="M14 12V15M16 10V15" stroke="#fff"/></svg>
<svg class="ab" style="left:1417px;top:871px;" width="18" height="16" viewBox="0 0 18 16"><path d="M1 5.5H4L8 1.5V14.5L4 10.5H1Z" fill="none" stroke="#fff" stroke-width="1.2"/><path d="M10.5 5.5Q12 8 10.5 10.5M12.5 3.5Q15 8 12.5 12.5M14.5 1.5Q18 8 14.5 14.5" stroke="#fff" stroke-width="1.1" fill="none"/></svg>
<div class="t" style="left:1443.5px;top:875.01px;font-size:11.8px;color:#fff;">ENG</div>
<div class="t" style="left:1495px;top:865.50px;font-size:12.4px;color:#fff;">20:09</div>
<div class="t" style="left:1477px;top:883.91px;font-size:13.1px;color:#fff;">2025/10/21</div>
<svg class="ab" style="left:1558px;top:871px;" width="18" height="17" viewBox="0 0 18 17"><path d="M0.7 0.7H17.3V12.3H9L5 16V12.3H0.7Z" fill="none" stroke="#fff" stroke-width="1.3"/></svg>
<div class="ab" style="left:1595px;top:860px;width:1px;height:40px;background:#555;"></div>
<div class="ab" style="left:0;top:0;width:1600px;height:900px;overflow:hidden;pointer-events:none">
<div class="t" style="left:-151.5px;top:149.5px;font-size:20.8px;letter-spacing:0px;color:rgba(120,120,120,0.2);text-shadow:0.5px 0.5px 0 rgba(120,120,120,0.1);transform:translate(-50%,-50%) rotate(-45deg)">audit审计01(Audit1)</div>
<div class="t" style="left:-134.5px;top:164.5px;font-size:20.8px;letter-spacing:0px;color:rgba(120,120,120,0.2);text-shadow:0.5px 0.5px 0 rgba(120,120,120,0.1);transform:translate(-50%,-50%) rotate(-45deg)">audit-172.18.210.237</div>
<div class="t" style="left:-151.5px;top:449.5px;font-size:20.8px;letter-spacing:0px;color:rgba(120,120,120,0.2);text-shadow:0.5px 0.5px 0 rgba(120,120,120,0.1);transform:translate(-50%,-50%) rotate(-45deg)">audit审计01(Audit1)</div>
<div class="t" style="left:-134.5px;top:464.5px;font-size:20.8px;letter-spacing:0px;color:rgba(120,120,120,0.2);text-shadow:0.5px 0.5px 0 rgba(120,120,120,0.1);transform:translate(-50%,-50%) rotate(-45deg)">audit-172.18.210.237</div>
<div class="t" style="left:-151.5px;top:749.5px;font-size:20.8px;letter-spacing:0px;color:rgba(120,120,120,0.2);text-shadow:0.5px 0.5px 0 rgba(120,120,120,0.1);transform:translate(-50%,-50%) rotate(-45deg)">audit审计01(Audit1)</div>
<div class="t" style="left:-134.5px;top:764.5px;font-size:20.8px;letter-spacing:0px;color:rgba(120,120,120,0.2);text-shadow:0.5px 0.5px 0 rgba(120,120,120,0.1);transform:translate(-50%,-50%) rotate(-45deg)">audit-172.18.210.237</div>
<div class="t" style="left:148.5px;top:149.5px;font-size:20.8px;letter-spacing:0px;color:rgba(120,120,120,0.2);text-shadow:0.5px 0.5px 0 rgba(120,120,120,0.1);transform:translate(-50%,-50%) rotate(-45deg)">audit审计01(Audit1)</div>
<div class="t" style="left:165.5px;top:164.5px;font-size:20.8px;letter-spacing:0px;color:rgba(120,120,120,0.2);text-shadow:0.5px 0.5px 0 rgba(120,120,120,0.1);transform:translate(-50%,-50%) rotate(-45deg)">audit-172.18.210.237</div>
<div class="t" style="left:148.5px;top:449.5px;font-size:20.8px;letter-spacing:0px;color:rgba(120,120,120,0.2);text-shadow:0.5px 0.5px 0 rgba(120,120,120,0.1);transform:translate(-50%,-50%) rotate(-45deg)">audit审计01(Audit1)</div>
<div class="t" style="left:165.5px;top:464.5px;font-size:20.8px;letter-spacing:0px;color:rgba(120,120,120,0.2);text-shadow:0.5px 0.5px 0 rgba(120,120,120,0.1);transform:translate(-50%,-50%) rotate(-45deg)">audit-172.18.210.237</div>
<div class="t" style="left:148.5px;top:749.5px;font-size:20.8px;letter-spacing:0px;color:rgba(120,120,120,0.2);text-shadow:0.5px 0.5px 0 rgba(120,120,120,0.1);transform:translate(-50%,-50%) rotate(-45deg)">audit审计01(Audit1)</div>
<div class="t" style="left:165.5px;top:764.5px;font-size:20.8px;letter-spacing:0px;color:rgba(120,120,120,0.2);text-shadow:0.5px 0.5px 0 rgba(120,120,120,0.1);transform:translate(-50%,-50%) rotate(-45deg)">audit-172.18.210.237</div>
<div class="t" style="left:448.5px;top:149.5px;font-size:20.8px;letter-spacing:0px;color:rgba(120,120,120,0.2);text-shadow:0.5px 0.5px 0 rgba(120,120,120,0.1);transform:translate(-50%,-50%) rotate(-45deg)">audit审计01(Audit1)</div>
<div class="t" style="left:465.5px;top:164.5px;font-size:20.8px;letter-spacing:0px;color:rgba(120,120,120,0.2);text-shadow:0.5px 0.5px 0 rgba(120,120,120,0.1);transform:translate(-50%,-50%) rotate(-45deg)">audit-172.18.210.237</div>
<div class="t" style="left:448.5px;top:449.5px;font-size:20.8px;letter-spacing:0px;color:rgba(120,120,120,0.2);text-shadow:0.5px 0.5px 0 rgba(120,120,120,0.1);transform:translate(-50%,-50%) rotate(-45deg)">audit审计01(Audit1)</div>
<div class="t" style="left:465.5px;top:464.5px;font-size:20.8px;letter-spacing:0px;color:rgba(120,120,120,0.2);text-shadow:0.5px 0.5px 0 rgba(120,120,120,0.1);transform:translate(-50%,-50%) rotate(-45deg)">audit-172.18.210.237</div>
<div class="t" style="left:448.5px;top:749.5px;font-size:20.8px;letter-spacing:0px;color:rgba(120,120,120,0.2);text-shadow:0.5px 0.5px 0 rgba(120,120,120,0.1);transform:translate(-50%,-50%) rotate(-45deg)">audit审计01(Audit1)</div>
<div class="t" style="left:465.5px;top:764.5px;font-size:20.8px;letter-spacing:0px;color:rgba(120,120,120,0.2);text-shadow:0.5px 0.5px 0 rgba(120,120,120,0.1);transform:translate(-50%,-50%) rotate(-45deg)">audit-172.18.210.237</div>
<div class="t" style="left:748.5px;top:149.5px;font-size:20.8px;letter-spacing:0px;color:rgba(120,120,120,0.2);text-shadow:0.5px 0.5px 0 rgba(120,120,120,0.1);transform:translate(-50%,-50%) rotate(-45deg)">audit审计01(Audit1)</div>
<div class="t" style="left:765.5px;top:164.5px;font-size:20.8px;letter-spacing:0px;color:rgba(120,120,120,0.2);text-shadow:0.5px 0.5px 0 rgba(120,120,120,0.1);transform:translate(-50%,-50%) rotate(-45deg)">audit-172.18.210.237</div>
<div class="t" style="left:748.5px;top:449.5px;font-size:20.8px;letter-spacing:0px;color:rgba(120,120,120,0.2);text-shadow:0.5px 0.5px 0 rgba(120,120,120,0.1);transform:translate(-50%,-50%) rotate(-45deg)">audit审计01(Audit1)</div>
<div class="t" style="left:765.5px;top:464.5px;font-size:20.8px;letter-spacing:0px;color:rgba(120,120,120,0.2);text-shadow:0.5px 0.5px 0 rgba(120,120,120,0.1);transform:translate(-50%,-50%) rotate(-45deg)">audit-172.18.210.237</div>
<div class="t" style="left:748.5px;top:749.5px;font-size:20.8px;letter-spacing:0px;color:rgba(120,120,120,0.2);text-shadow:0.5px 0.5px 0 rgba(120,120,120,0.1);transform:translate(-50%,-50%) rotate(-45deg)">audit审计01(Audit1)</div>
<div class="t" style="left:765.5px;top:764.5px;font-size:20.8px;letter-spacing:0px;color:rgba(120,120,120,0.2);text-shadow:0.5px 0.5px 0 rgba(120,120,120,0.1);transform:translate(-50%,-50%) rotate(-45deg)">audit-172.18.210.237</div>
<div class="t" style="left:1048.5px;top:149.5px;font-size:20.8px;letter-spacing:0px;color:rgba(120,120,120,0.2);text-shadow:0.5px 0.5px 0 rgba(120,120,120,0.1);transform:translate(-50%,-50%) rotate(-45deg)">audit审计01(Audit1)</div>
<div class="t" style="left:1065.5px;top:164.5px;font-size:20.8px;letter-spacing:0px;color:rgba(120,120,120,0.2);text-shadow:0.5px 0.5px 0 rgba(120,120,120,0.1);transform:translate(-50%,-50%) rotate(-45deg)">audit-172.18.210.237</div>
<div class="t" style="left:1048.5px;top:449.5px;font-size:20.8px;letter-spacing:0px;color:rgba(120,120,120,0.2);text-shadow:0.5px 0.5px 0 rgba(120,120,120,0.1);transform:translate(-50%,-50%) rotate(-45deg)">audit审计01(Audit1)</div>
<div class="t" style="left:1065.5px;top:464.5px;font-size:20.8px;letter-spacing:0px;color:rgba(120,120,120,0.2);text-shadow:0.5px 0.5px 0 rgba(120,120,120,0.1);transform:translate(-50%,-50%) rotate(-45deg)">audit-172.18.210.237</div>
<div class="t" style="left:1048.5px;top:749.5px;font-size:20.8px;letter-spacing:0px;color:rgba(120,120,120,0.2);text-shadow:0.5px 0.5px 0 rgba(120,120,120,0.1);transform:translate(-50%,-50%) rotate(-45deg)">audit审计01(Audit1)</div>
<div class="t" style="left:1065.5px;top:764.5px;font-size:20.8px;letter-spacing:0px;color:rgba(120,120,120,0.2);text-shadow:0.5px 0.5px 0 rgba(120,120,120,0.1);transform:translate(-50%,-50%) rotate(-45deg)">audit-172.18.210.237</div>
<div class="t" style="left:1348.5px;top:149.5px;font-size:20.8px;letter-spacing:0px;color:rgba(120,120,120,0.2);text-shadow:0.5px 0.5px 0 rgba(120,120,120,0.1);transform:translate(-50%,-50%) rotate(-45deg)">audit审计01(Audit1)</div>
<div class="t" style="left:1365.5px;top:164.5px;font-size:20.8px;letter-spacing:0px;color:rgba(120,120,120,0.2);text-shadow:0.5px 0.5px 0 rgba(120,120,120,0.1);transform:translate(-50%,-50%) rotate(-45deg)">audit-172.18.210.237</div>
<div class="t" style="left:1348.5px;top:449.5px;font-size:20.8px;letter-spacing:0px;color:rgba(120,120,120,0.2);text-shadow:0.5px 0.5px 0 rgba(120,120,120,0.1);transform:translate(-50%,-50%) rotate(-45deg)">audit审计01(Audit1)</div>
<div class="t" style="left:1365.5px;top:464.5px;font-size:20.8px;letter-spacing:0px;color:rgba(120,120,120,0.2);text-shadow:0.5px 0.5px 0 rgba(120,120,120,0.1);transform:translate(-50%,-50%) rotate(-45deg)">audit-172.18.210.237</div>
<div class="t" style="left:1348.5px;top:749.5px;font-size:20.8px;letter-spacing:0px;color:rgba(120,120,120,0.2);text-shadow:0.5px 0.5px 0 rgba(120,120,120,0.1);transform:translate(-50%,-50%) rotate(-45deg)">audit审计01(Audit1)</div>
<div class="t" style="left:1365.5px;top:764.5px;font-size:20.8px;letter-spacing:0px;color:rgba(120,120,120,0.2);text-shadow:0.5px 0.5px 0 rgba(120,120,120,0.1);transform:translate(-50%,-50%) rotate(-45deg)">audit-172.18.210.237</div>
<div class="t" style="left:1648.5px;top:149.5px;font-size:20.8px;letter-spacing:0px;color:rgba(120,120,120,0.2);text-shadow:0.5px 0.5px 0 rgba(120,120,120,0.1);transform:translate(-50%,-50%) rotate(-45deg)">audit审计01(Audit1)</div>
<div class="t" style="left:1665.5px;top:164.5px;font-size:20.8px;letter-spacing:0px;color:rgba(120,120,120,0.2);text-shadow:0.5px 0.5px 0 rgba(120,120,120,0.1);transform:translate(-50%,-50%) rotate(-45deg)">audit-172.18.210.237</div>
<div class="t" style="left:1648.5px;top:449.5px;font-size:20.8px;letter-spacing:0px;color:rgba(120,120,120,0.2);text-shadow:0.5px 0.5px 0 rgba(120,120,120,0.1);transform:translate(-50%,-50%) rotate(-45deg)">audit审计01(Audit1)</div>
<div class="t" style="left:1665.5px;top:464.5px;font-size:20.8px;letter-spacing:0px;color:rgba(120,120,120,0.2);text-shadow:0.5px 0.5px 0 rgba(120,120,120,0.1);transform:translate(-50%,-50%) rotate(-45deg)">audit-172.18.210.237</div>
<div class="t" style="left:1648.5px;top:749.5px;font-size:20.8px;letter-spacing:0px;color:rgba(120,120,120,0.2);text-shadow:0.5px 0.5px 0 rgba(120,120,120,0.1);transform:translate(-50%,-50%) rotate(-45deg)">audit审计01(Audit1)</div>
<div class="t" style="left:1665.5px;top:764.5px;font-size:20.8px;letter-spacing:0px;color:rgba(120,120,120,0.2);text-shadow:0.5px 0.5px 0 rgba(120,120,120,0.1);transform:translate(-50%,-50%) rotate(-45deg)">audit-172.18.210.237</div>
</div>
</body></html>
